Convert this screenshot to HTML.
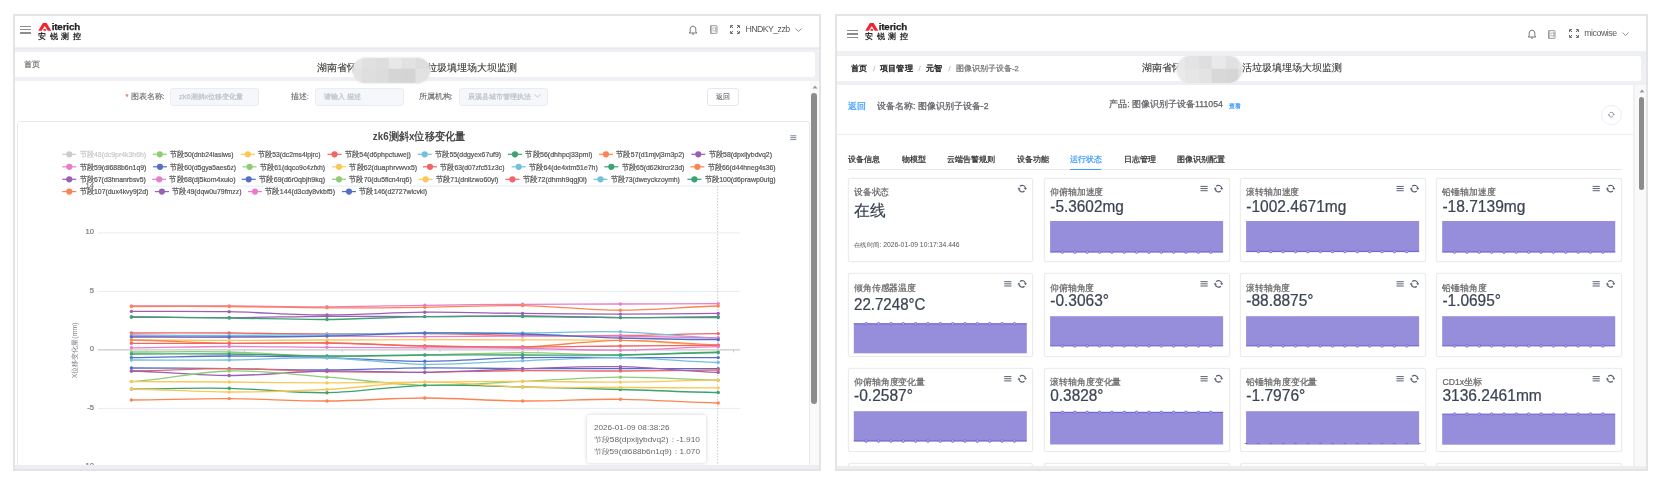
<!DOCTYPE html>
<html><head><meta charset="utf-8"><style>
*{margin:0;padding:0;box-sizing:border-box}
html,body{width:1662px;height:489px;overflow:hidden;background:#fff}
body{position:relative;font-family:"Liberation Sans",sans-serif;color:#333}
.t{position:absolute;white-space:nowrap;line-height:1}
div{-webkit-text-stroke:0.25px currentColor}
</style></head>
<body>
<div style="position:absolute;left:0;top:0;width:1662px;height:489px;will-change:transform">
<div style="position:absolute;left:15px;top:47.3px;width:804px;height:421px;background:#eef0f4"></div><div style="position:absolute;left:15px;top:48px;width:804px;height:1px;background:#e6e8ec"></div><div style="position:absolute;left:15px;top:16px;width:804px;height:31px;background:#fff"></div><div style="position:absolute;left:15px;top:52.4px;width:800px;height:24.6px;background:#fff;border-radius:0 3px 3px 0"></div><div style="position:absolute;left:15px;top:81px;width:804px;height:385px;background:#fff"></div><div style="position:absolute;left:837px;top:51px;width:809px;height:417px;background:#eef0f4"></div><div style="position:absolute;left:837px;top:16px;width:809px;height:35px;background:#fff"></div><div style="position:absolute;left:837px;top:56px;width:804px;height:25px;background:#fff;border-radius:0 3px 3px 0"></div><div style="position:absolute;left:837px;top:85px;width:797px;height:381px;background:#fff"></div><div style="position:absolute;left:20.2px;top:25.6px;width:11px;height:1.4px;background:#8d8d8d"></div><div style="position:absolute;left:20.2px;top:28.900000000000002px;width:11px;height:1.4px;background:#8d8d8d"></div><div style="position:absolute;left:20.2px;top:32.199999999999996px;width:11px;height:1.4px;background:#8d8d8d"></div><svg style="position:absolute;left:38.2px;top:23.0px;" width="14" height="9" viewBox="0 0 14 9"><path d="M0.2 7.8 L4.9 0.1 L8.6 0.1 L13.3 7.8 L9.8 7.8 L6.75 2.9 L3.7 7.8 Z" fill="#f5222d"/><rect x="5.4" y="6.0" width="2.7" height="1.8" rx="0.6" fill="#f5222d"/></svg><div style="position:absolute;left:51.7px;top:22.1px;white-space:nowrap;font-size:9.8px;font-weight:bold;color:#222;letter-spacing:-0.15px;line-height:1">iterich</div><div style="position:absolute;left:37.900000000000006px;top:32.3px;white-space:nowrap;font-size:8.4px;font-weight:bold;color:#2a2a2a;letter-spacing:3.75px;line-height:1;-webkit-text-stroke:0">安锐测控</div><svg style="position:absolute;left:687.5px;top:24.5px;" width="10" height="10" viewBox="0 0 10 10"><path d="M1.2 8 L8.8 8 L7.8 6.8 L7.8 4.2 C7.8 2.4 6.6 1.2 5 1.2 C3.4 1.2 2.2 2.4 2.2 4.2 L2.2 6.8 Z" fill="none" stroke="#666" stroke-width="0.9" stroke-linejoin="round"/><path d="M4 9 L6 9" stroke="#666" stroke-width="0.9"/></svg><svg style="position:absolute;left:709.5px;top:25px;" width="8" height="9" viewBox="0 0 8 9"><rect x="0.5" y="0.5" width="6.6" height="8" rx="0.5" fill="#ececec" stroke="#9a9a9a" stroke-width="0.8"/><path d="M1 0.6 L1 8.4" stroke="#888" stroke-width="0.9"/><circle cx="4.3" cy="4.3" r="1.5" fill="#fff" stroke="#aaa" stroke-width="0.6"/><path d="M6 2 L6 7" stroke="#999" stroke-width="0.7"/></svg><svg style="position:absolute;left:730px;top:24.8px;" width="10" height="9" viewBox="0 0 10 9"><path d="M0.6 3 L0.6 0.6 L3 0.6 M0.8 0.8 L3 3" fill="none" stroke="#666" stroke-width="1"/><path d="M9.4 3 L9.4 0.6 L7 0.6 M9.2 0.8 L7 3" fill="none" stroke="#666" stroke-width="1"/><path d="M0.6 6 L0.6 8.4 L3 8.4 M0.8 8.2 L3 6" fill="none" stroke="#666" stroke-width="1"/><path d="M9.4 6 L9.4 8.4 L7 8.4 M9.2 8.2 L7 6" fill="none" stroke="#666" stroke-width="1"/></svg><div style="position:absolute;left:745.5px;top:24.5px;white-space:nowrap;font-size:8.8px;color:#5a5a5a;letter-spacing:-0.6px;line-height:1;-webkit-text-stroke:0">HNDKY_zzb</div><svg style="position:absolute;left:795px;top:27.8px;" width="7" height="4.5" viewBox="0 0 7 4.5"><path d="M0.5 0.5 L3.5 3.5 L6.5 0.5" fill="none" stroke="#888" stroke-width="0.9"/></svg><div style="position:absolute;left:846.5px;top:29.900000000000002px;width:11px;height:1.4px;background:#8d8d8d"></div><div style="position:absolute;left:846.5px;top:33.199999999999996px;width:11px;height:1.4px;background:#8d8d8d"></div><div style="position:absolute;left:846.5px;top:36.5px;width:11px;height:1.4px;background:#8d8d8d"></div><svg style="position:absolute;left:865.2px;top:23.0px;" width="14" height="9" viewBox="0 0 14 9"><path d="M0.2 7.8 L4.9 0.1 L8.6 0.1 L13.3 7.8 L9.8 7.8 L6.75 2.9 L3.7 7.8 Z" fill="#f5222d"/><rect x="5.4" y="6.0" width="2.7" height="1.8" rx="0.6" fill="#f5222d"/></svg><div style="position:absolute;left:878.7px;top:22.1px;white-space:nowrap;font-size:9.8px;font-weight:bold;color:#222;letter-spacing:-0.15px;line-height:1">iterich</div><div style="position:absolute;left:864.9000000000001px;top:32.3px;white-space:nowrap;font-size:8.4px;font-weight:bold;color:#2a2a2a;letter-spacing:3.75px;line-height:1;-webkit-text-stroke:0">安锐测控</div><svg style="position:absolute;left:1526.5px;top:28.7px;" width="10" height="10" viewBox="0 0 10 10"><path d="M1.2 8 L8.8 8 L7.8 6.8 L7.8 4.2 C7.8 2.4 6.6 1.2 5 1.2 C3.4 1.2 2.2 2.4 2.2 4.2 L2.2 6.8 Z" fill="none" stroke="#666" stroke-width="0.9" stroke-linejoin="round"/><path d="M4 9 L6 9" stroke="#666" stroke-width="0.9"/></svg><svg style="position:absolute;left:1548.3px;top:29.5px;" width="8" height="9" viewBox="0 0 8 9"><rect x="0.5" y="0.5" width="6.6" height="8" rx="0.5" fill="#ececec" stroke="#9a9a9a" stroke-width="0.8"/><path d="M1 0.6 L1 8.4" stroke="#888" stroke-width="0.9"/><circle cx="4.3" cy="4.3" r="1.5" fill="#fff" stroke="#aaa" stroke-width="0.6"/><path d="M6 2 L6 7" stroke="#999" stroke-width="0.7"/></svg><svg style="position:absolute;left:1569px;top:29px;" width="10" height="9" viewBox="0 0 10 9"><path d="M0.6 3 L0.6 0.6 L3 0.6 M0.8 0.8 L3 3" fill="none" stroke="#666" stroke-width="1"/><path d="M9.4 3 L9.4 0.6 L7 0.6 M9.2 0.8 L7 3" fill="none" stroke="#666" stroke-width="1"/><path d="M0.6 6 L0.6 8.4 L3 8.4 M0.8 8.2 L3 6" fill="none" stroke="#666" stroke-width="1"/><path d="M9.4 6 L9.4 8.4 L7 8.4 M9.2 8.2 L7 6" fill="none" stroke="#666" stroke-width="1"/></svg><div style="position:absolute;left:1584.2px;top:28.6px;white-space:nowrap;font-size:8.8px;color:#5a5a5a;letter-spacing:-0.45px;line-height:1;-webkit-text-stroke:0">micowise</div><svg style="position:absolute;left:1622px;top:32px;" width="7" height="4.5" viewBox="0 0 7 4.5"><path d="M0.5 0.5 L3.5 3.5 L6.5 0.5" fill="none" stroke="#888" stroke-width="0.9"/></svg><div style="position:absolute;left:24.2px;top:61.4px;white-space:nowrap;font-size:7.7px;color:#777;line-height:1">首页</div><div style="position:absolute;left:316.8px;top:63.3px;white-space:nowrap;font-size:10.3px;color:#333;line-height:1;-webkit-text-stroke:0.1px #333">湖南省怀</div><div style="position:absolute;left:427.4px;top:63.3px;white-space:nowrap;font-size:10.3px;color:#333;line-height:1;-webkit-text-stroke:0.1px #333">垃圾填埋场大坝监测</div><div style="position:absolute;left:353.2px;top:58.4px;width:77.3px;height:24.6px;border-radius:12.3px;overflow:hidden;box-shadow:0 0 1.5px 1px rgba(235,235,235,0.8)"><svg width="77.3" height="24.6" style="display:block"><rect x="0.00" y="0.00" width="9.20" height="11.00" fill="#e6e6e6"/><rect x="8.90" y="0.00" width="13.50" height="11.00" fill="#e0e0e0"/><rect x="22.10" y="0.00" width="13.90" height="11.00" fill="#dddddd"/><rect x="35.70" y="0.00" width="13.60" height="11.00" fill="#e8e8e8"/><rect x="49.00" y="0.00" width="13.90" height="11.00" fill="#e2e2e2"/><rect x="62.60" y="0.00" width="15.00" height="11.00" fill="#dddddd"/><rect x="0.00" y="10.70" width="9.20" height="14.20" fill="#e3e3e3"/><rect x="8.90" y="10.70" width="13.50" height="14.20" fill="#dedede"/><rect x="22.10" y="10.70" width="13.90" height="14.20" fill="#dcdcdc"/><rect x="35.70" y="10.70" width="13.60" height="14.20" fill="#d5d5d5"/><rect x="49.00" y="10.70" width="13.90" height="14.20" fill="#d4d4d4"/><rect x="62.60" y="10.70" width="15.00" height="14.20" fill="#e2e2e2"/></svg></div><div style="position:absolute;left:850.6px;top:65.2px;white-space:nowrap;font-size:7.7px;color:#303133;line-height:1;-webkit-text-stroke:0.45px #303133">首页</div><div style="position:absolute;left:873.2px;top:65.2px;white-space:nowrap;font-size:7.3px;color:#c0c4cc;line-height:1">/</div><div style="position:absolute;left:880.1px;top:65.2px;white-space:nowrap;font-size:7.7px;color:#303133;line-height:1;-webkit-text-stroke:0.45px #303133;letter-spacing:0.2px">项目管理</div><div style="position:absolute;left:918.5px;top:65.2px;white-space:nowrap;font-size:7.3px;color:#c0c4cc;line-height:1">/</div><div style="position:absolute;left:925.8px;top:65.2px;white-space:nowrap;font-size:7.7px;color:#303133;line-height:1;-webkit-text-stroke:0.45px #303133;letter-spacing:0.2px">元智</div><div style="position:absolute;left:948.5px;top:65.2px;white-space:nowrap;font-size:7.3px;color:#c0c4cc;line-height:1">/</div><div style="position:absolute;left:955.9px;top:65.0px;white-space:nowrap;font-size:7.5px;color:#777;line-height:1">图像识别子设备-2</div><div style="position:absolute;left:1141.5px;top:63.3px;white-space:nowrap;font-size:10.3px;color:#333;line-height:1;-webkit-text-stroke:0.1px #333">湖南省怀</div><div style="position:absolute;left:1242.4px;top:63.3px;white-space:nowrap;font-size:10.3px;color:#333;line-height:1;-webkit-text-stroke:0.1px #333">活垃圾填埋场大坝监测</div><div style="position:absolute;left:1177.4px;top:55.9px;width:64.6px;height:26.8px;border-radius:13.4px;overflow:hidden;box-shadow:0 0 1.5px 1px rgba(235,235,235,0.8)"><svg width="64.6" height="26.8" style="display:block"><rect x="0.00" y="0.00" width="7.60" height="13.10" fill="#e8e8e8"/><rect x="7.30" y="0.00" width="14.60" height="13.10" fill="#e3e3e3"/><rect x="21.60" y="0.00" width="13.40" height="13.10" fill="#dedede"/><rect x="34.70" y="0.00" width="14.20" height="13.10" fill="#e9e9e9"/><rect x="48.60" y="0.00" width="13.00" height="13.10" fill="#e1e1e1"/><rect x="61.30" y="0.00" width="3.60" height="13.10" fill="#e6e6e6"/><rect x="0.00" y="12.80" width="7.60" height="14.30" fill="#e9e9e9"/><rect x="7.30" y="12.80" width="14.60" height="14.30" fill="#e6e6e6"/><rect x="21.60" y="12.80" width="13.40" height="14.30" fill="#e3e3e3"/><rect x="34.70" y="12.80" width="14.20" height="14.30" fill="#d8d8d8"/><rect x="48.60" y="12.80" width="13.00" height="14.30" fill="#d6d6d6"/><rect x="61.30" y="12.80" width="3.60" height="14.30" fill="#e0e0e0"/></svg></div><div style="position:absolute;left:125.5px;top:93.0px;white-space:nowrap;font-size:7.5px;color:#f56c6c;line-height:1">*</div><div style="position:absolute;left:130.5px;top:93.2px;white-space:nowrap;font-size:7.6px;color:#606266;line-height:1;-webkit-text-stroke:0.08px #606266">图表名称:</div><div style="position:absolute;left:170px;top:87.5px;width:89px;height:18px;background:#f5f7fa;border:1px solid #e9ecf2;border-radius:3px"></div><div style="position:absolute;left:179px;top:93.3px;white-space:nowrap;font-size:7.4px;color:#c0c4cc;line-height:1">zk6测斜x位移变化量</div><div style="position:absolute;left:290.7px;top:93.2px;white-space:nowrap;font-size:7.6px;color:#606266;line-height:1;-webkit-text-stroke:0.08px #606266">描述:</div><div style="position:absolute;left:314.5px;top:87.5px;width:89px;height:18px;background:#f5f7fa;border:1px solid #e9ecf2;border-radius:3px"></div><div style="position:absolute;left:323.5px;top:93.3px;white-space:nowrap;font-size:7.4px;color:#c0c4cc;line-height:1">请输入 描述</div><div style="position:absolute;left:418.6px;top:93.2px;white-space:nowrap;font-size:7.6px;color:#606266;line-height:1;-webkit-text-stroke:0.08px #606266">所属机构:</div><div style="position:absolute;left:459px;top:87.5px;width:88.5px;height:18px;background:#f5f7fa;border:1px solid #e9ecf2;border-radius:3px"></div><div style="position:absolute;left:467.6px;top:93.3px;white-space:nowrap;font-size:7.0px;color:#c0c4cc;line-height:1;width:63px;overflow:hidden">辰溪县城市管理执法</div><svg style="position:absolute;left:534px;top:94.3px;" width="7" height="4" viewBox="0 0 7 4"><path d="M0.5 0.5 L3.5 3 L6.5 0.5" fill="none" stroke="#c0c4cc" stroke-width="0.9"/></svg><div style="position:absolute;left:707px;top:88px;width:32px;height:17.5px;background:#fff;border:1px solid #e4e7ed;border-radius:3px"></div><div style="position:absolute;left:716px;top:93.3px;white-space:nowrap;font-size:7.4px;color:#606266;line-height:1;-webkit-text-stroke:0.08px #606266">返回</div><div style="position:absolute;left:848.2px;top:102.0px;white-space:nowrap;font-size:8.7px;color:#409eff;line-height:1">返回</div><div style="position:absolute;left:877px;top:102.0px;white-space:nowrap;font-size:8.7px;color:#606266;line-height:1">设备名称: 图像识别子设备-2</div><div style="position:absolute;left:1109.3px;top:100.0px;white-space:nowrap;font-size:8.7px;color:#606266;line-height:1">产品: 图像识别子设备111054</div><div style="position:absolute;left:1229px;top:102.6px;white-space:nowrap;font-size:6.1px;color:#409eff;line-height:1">查看</div><div style="position:absolute;left:1601px;top:104.5px;width:20.5px;height:20.5px;border:1px solid #ebeef5;border-radius:50%"></div><div style="position:absolute;left:837px;top:133.5px;width:797px;height:1px;background:#ebeef5"></div><div style="position:absolute;left:848.2px;top:155.7px;white-space:nowrap;font-size:7.7px;color:#303133;line-height:1">设备信息</div><div style="position:absolute;left:901.5px;top:155.7px;white-space:nowrap;font-size:7.7px;color:#303133;line-height:1">物模型</div><div style="position:absolute;left:947.3px;top:155.7px;white-space:nowrap;font-size:7.7px;color:#303133;line-height:1">云端告警规则</div><div style="position:absolute;left:1016.7px;top:155.7px;white-space:nowrap;font-size:7.7px;color:#303133;line-height:1">设备功能</div><div style="position:absolute;left:1070.2px;top:155.7px;white-space:nowrap;font-size:7.7px;color:#409eff;line-height:1">运行状态</div><div style="position:absolute;left:1124.1px;top:155.7px;white-space:nowrap;font-size:7.7px;color:#303133;line-height:1">日志管理</div><div style="position:absolute;left:1177.2px;top:155.7px;white-space:nowrap;font-size:7.7px;color:#303133;line-height:1">图像识别配置</div><div style="position:absolute;left:847.6px;top:168.8px;width:774px;height:1.2px;background:#e4e7ed"></div><div style="position:absolute;left:1070.2px;top:168.6px;width:31.2px;height:1.8px;background:#409eff"></div><div style="position:absolute;left:17px;top:121px;width:793px;height:350px;background:#fff;border:1px solid #e9e9e9;border-radius:3px"></div><div style="position:absolute;left:587.3px;top:415.2px;width:119px;height:47.6px;background:#fff;border-radius:3px;box-shadow:0 0 4px rgba(0,0,0,0.18)"></div><svg style="position:absolute;left:0;top:0" width="831" height="489" viewBox="0 0 831 489"><text x="372.80" y="140.30" font-size="10.6" fill="#464646" font-weight="bold" text-anchor="start" textLength="92.40" lengthAdjust="spacingAndGlyphs" >zk6测斜x位移变化量</text><rect x="790.3" y="135.20" width="6" height="1.1" fill="#8692a6"/><rect x="790.3" y="137.10" width="6" height="1.1" fill="#8692a6"/><rect x="790.3" y="139.00" width="6" height="1.1" fill="#8692a6"/><rect x="98" y="185.60" width="642" height="1" fill="#e6ebf3"/><text x="94.00" y="187.50" font-size="7.6" fill="#7a7d85" font-weight="normal" text-anchor="end" stroke="#7a7d85" stroke-width="0.22" >14</text><rect x="98" y="232.40" width="642" height="1" fill="#e6ebf3"/><text x="94.00" y="234.30" font-size="7.6" fill="#7a7d85" font-weight="normal" text-anchor="end" stroke="#7a7d85" stroke-width="0.22" >10</text><rect x="98" y="290.90" width="642" height="1" fill="#e6ebf3"/><text x="94.00" y="292.80" font-size="7.6" fill="#7a7d85" font-weight="normal" text-anchor="end" stroke="#7a7d85" stroke-width="0.22" >5</text><rect x="98" y="407.90" width="642" height="1" fill="#e6ebf3"/><text x="94.00" y="409.80" font-size="7.6" fill="#7a7d85" font-weight="normal" text-anchor="end" stroke="#7a7d85" stroke-width="0.22" >-5</text><rect x="98" y="466.40" width="642" height="1" fill="#e6ebf3"/><text x="94.00" y="468.30" font-size="7.6" fill="#7a7d85" font-weight="normal" text-anchor="end" stroke="#7a7d85" stroke-width="0.22" >-10</text><text x="94.00" y="351.30" font-size="7.6" fill="#7a7d85" font-weight="normal" text-anchor="end" stroke="#7a7d85" stroke-width="0.22" >0</text><rect x="98" y="349.30" width="642" height="1.2" fill="#c4c6cc"/><rect x="146.20" y="349.90" width="0.8" height="2.5" fill="#c4c6cc"/><rect x="244.00" y="349.90" width="0.8" height="2.5" fill="#c4c6cc"/><rect x="341.80" y="349.90" width="0.8" height="2.5" fill="#c4c6cc"/><rect x="439.60" y="349.90" width="0.8" height="2.5" fill="#c4c6cc"/><rect x="537.40" y="349.90" width="0.8" height="2.5" fill="#c4c6cc"/><rect x="635.20" y="349.90" width="0.8" height="2.5" fill="#c4c6cc"/><rect x="733.00" y="349.90" width="0.8" height="2.5" fill="#c4c6cc"/><text x="0" y="0" font-size="7" fill="#7a7d85" text-anchor="middle" transform="translate(77.2 350.3) rotate(-90)" textLength="56" lengthAdjust="spacingAndGlyphs">X位移变化量(mm)</text><line x1="717.6" y1="186" x2="717.6" y2="466" stroke="#b8bcc4" stroke-width="0.8" stroke-dasharray="1.5 1.5"/><path d="M131.40 306.00 C165.63 306.00 194.97 305.86 229.20 306.00 C263.43 306.14 292.77 306.92 327.00 306.80 C361.23 306.68 390.57 305.74 424.80 305.30 C459.03 304.86 488.37 304.53 522.60 304.30 C556.83 304.07 586.17 304.12 620.40 304.00 C654.63 303.88 683.97 303.67 718.20 303.60" fill="none" stroke="#ea7ccc" stroke-width="1.3"/><circle cx="131.4" cy="306" r="1.7" fill="#ea7ccc"/><circle cx="229.2" cy="306" r="1.7" fill="#ea7ccc"/><circle cx="327.0" cy="306.8" r="1.7" fill="#ea7ccc"/><circle cx="424.8" cy="305.3" r="1.7" fill="#ea7ccc"/><circle cx="522.6" cy="304.3" r="1.7" fill="#ea7ccc"/><circle cx="620.4" cy="304" r="1.7" fill="#ea7ccc"/><circle cx="718.2" cy="303.6" r="1.7" fill="#ea7ccc"/><path d="M131.40 306.50 C165.63 306.50 194.97 306.27 229.20 306.50 C263.43 306.73 292.77 307.66 327.00 307.80 C361.23 307.94 390.57 307.69 424.80 307.30 C459.03 306.92 488.37 305.09 522.60 305.60 C556.83 306.11 586.17 310.13 620.40 310.20 C654.63 310.27 683.97 306.74 718.20 306.00" fill="none" stroke="#fc8452" stroke-width="1.3"/><circle cx="131.4" cy="306.5" r="1.7" fill="#fc8452"/><circle cx="229.2" cy="306.5" r="1.7" fill="#fc8452"/><circle cx="327.0" cy="307.8" r="1.7" fill="#fc8452"/><circle cx="424.8" cy="307.3" r="1.7" fill="#fc8452"/><circle cx="522.6" cy="305.6" r="1.7" fill="#fc8452"/><circle cx="620.4" cy="310.2" r="1.7" fill="#fc8452"/><circle cx="718.2" cy="306" r="1.7" fill="#fc8452"/><path d="M131.40 311.40 C165.63 311.45 194.97 311.07 229.20 311.70 C263.43 312.33 292.77 314.91 327.00 315.00 C361.23 315.09 390.57 312.48 424.80 312.20 C459.03 311.92 488.37 313.07 522.60 313.40 C556.83 313.73 586.17 314.10 620.40 314.10 C654.63 314.10 683.97 313.52 718.20 313.40" fill="none" stroke="#9a60b4" stroke-width="1.3"/><circle cx="131.4" cy="311.4" r="1.7" fill="#9a60b4"/><circle cx="229.2" cy="311.7" r="1.7" fill="#9a60b4"/><circle cx="327.0" cy="315" r="1.7" fill="#9a60b4"/><circle cx="424.8" cy="312.2" r="1.7" fill="#9a60b4"/><circle cx="522.6" cy="313.4" r="1.7" fill="#9a60b4"/><circle cx="620.4" cy="314.1" r="1.7" fill="#9a60b4"/><circle cx="718.2" cy="313.4" r="1.7" fill="#9a60b4"/><path d="M131.40 317.00 C165.63 317.11 194.97 317.72 229.20 317.60 C263.43 317.48 292.77 316.48 327.00 316.30 C361.23 316.12 390.57 316.67 424.80 316.60 C459.03 316.53 488.37 315.72 522.60 315.90 C556.83 316.07 586.17 317.48 620.40 317.60 C654.63 317.72 683.97 316.78 718.20 316.60" fill="none" stroke="#9a60b4" stroke-width="1.3"/><circle cx="131.4" cy="317" r="1.7" fill="#9a60b4"/><circle cx="229.2" cy="317.6" r="1.7" fill="#9a60b4"/><circle cx="327.0" cy="316.3" r="1.7" fill="#9a60b4"/><circle cx="424.8" cy="316.6" r="1.7" fill="#9a60b4"/><circle cx="522.6" cy="315.9" r="1.7" fill="#9a60b4"/><circle cx="620.4" cy="317.6" r="1.7" fill="#9a60b4"/><circle cx="718.2" cy="316.6" r="1.7" fill="#9a60b4"/><path d="M131.40 317.00 C165.63 317.18 194.97 317.56 229.20 318.00 C263.43 318.44 292.77 319.75 327.00 319.50 C361.23 319.25 390.57 317.12 424.80 316.60 C459.03 316.08 488.37 316.32 522.60 316.50 C556.83 316.68 586.17 317.43 620.40 317.60 C654.63 317.78 683.97 317.52 718.20 317.50" fill="none" stroke="#3ba272" stroke-width="1.3"/><circle cx="131.4" cy="317" r="1.7" fill="#3ba272"/><circle cx="229.2" cy="318" r="1.7" fill="#3ba272"/><circle cx="327.0" cy="319.5" r="1.7" fill="#3ba272"/><circle cx="424.8" cy="316.6" r="1.7" fill="#3ba272"/><circle cx="522.6" cy="316.5" r="1.7" fill="#3ba272"/><circle cx="620.4" cy="317.6" r="1.7" fill="#3ba272"/><circle cx="718.2" cy="317.5" r="1.7" fill="#3ba272"/><path d="M131.40 333.00 C165.63 333.00 194.97 332.82 229.20 333.00 C263.43 333.18 292.77 333.91 327.00 334.00 C361.23 334.09 390.57 333.24 424.80 333.50 C459.03 333.76 488.37 335.15 522.60 335.50 C556.83 335.85 586.17 335.83 620.40 335.50 C654.63 335.17 683.97 333.93 718.20 333.60" fill="none" stroke="#ee6666" stroke-width="1.3"/><circle cx="131.4" cy="333" r="1.7" fill="#ee6666"/><circle cx="229.2" cy="333" r="1.7" fill="#ee6666"/><circle cx="327.0" cy="334" r="1.7" fill="#ee6666"/><circle cx="424.8" cy="333.5" r="1.7" fill="#ee6666"/><circle cx="522.6" cy="335.5" r="1.7" fill="#ee6666"/><circle cx="620.4" cy="335.5" r="1.7" fill="#ee6666"/><circle cx="718.2" cy="333.6" r="1.7" fill="#ee6666"/><path d="M131.40 335.00 C165.63 335.09 194.97 335.62 229.20 335.50 C263.43 335.38 292.77 334.74 327.00 334.30 C361.23 333.86 390.57 333.23 424.80 333.00 C459.03 332.77 488.37 333.21 522.60 333.00 C556.83 332.79 586.17 330.93 620.40 331.80 C654.63 332.68 683.97 336.92 718.20 338.00" fill="none" stroke="#73c0de" stroke-width="1.3"/><circle cx="131.4" cy="335" r="1.7" fill="#73c0de"/><circle cx="229.2" cy="335.5" r="1.7" fill="#73c0de"/><circle cx="327.0" cy="334.3" r="1.7" fill="#73c0de"/><circle cx="424.8" cy="333" r="1.7" fill="#73c0de"/><circle cx="522.6" cy="333" r="1.7" fill="#73c0de"/><circle cx="620.4" cy="331.8" r="1.7" fill="#73c0de"/><circle cx="718.2" cy="338" r="1.7" fill="#73c0de"/><path d="M131.40 336.00 C165.63 336.21 194.97 337.20 229.20 337.20 C263.43 337.20 292.77 336.09 327.00 336.00 C361.23 335.91 390.57 336.70 424.80 336.70 C459.03 336.70 488.37 336.12 522.60 336.00 C556.83 335.88 586.17 335.65 620.40 336.00 C654.63 336.35 683.97 337.65 718.20 338.00" fill="none" stroke="#ea7ccc" stroke-width="1.3"/><circle cx="131.4" cy="336" r="1.7" fill="#ea7ccc"/><circle cx="229.2" cy="337.2" r="1.7" fill="#ea7ccc"/><circle cx="327.0" cy="336" r="1.7" fill="#ea7ccc"/><circle cx="424.8" cy="336.7" r="1.7" fill="#ea7ccc"/><circle cx="522.6" cy="336" r="1.7" fill="#ea7ccc"/><circle cx="620.4" cy="336" r="1.7" fill="#ea7ccc"/><circle cx="718.2" cy="338" r="1.7" fill="#ea7ccc"/><path d="M131.40 337.00 C165.63 337.00 194.97 337.18 229.20 337.00 C263.43 336.82 292.77 336.70 327.00 336.00 C361.23 335.30 390.57 333.35 424.80 333.00 C459.03 332.65 488.37 333.12 522.60 334.00 C556.83 334.88 586.17 337.00 620.40 338.00 C654.63 339.00 683.97 339.40 718.20 339.70" fill="none" stroke="#5470c6" stroke-width="1.3"/><circle cx="131.4" cy="337" r="1.7" fill="#5470c6"/><circle cx="229.2" cy="337" r="1.7" fill="#5470c6"/><circle cx="327.0" cy="336" r="1.7" fill="#5470c6"/><circle cx="424.8" cy="333" r="1.7" fill="#5470c6"/><circle cx="522.6" cy="334" r="1.7" fill="#5470c6"/><circle cx="620.4" cy="338" r="1.7" fill="#5470c6"/><circle cx="718.2" cy="339.7" r="1.7" fill="#5470c6"/><path d="M131.40 340.00 C165.63 340.07 194.97 340.40 229.20 340.40 C263.43 340.40 292.77 340.12 327.00 340.00 C361.23 339.88 390.57 339.72 424.80 339.70 C459.03 339.68 488.37 339.78 522.60 339.90 C556.83 340.02 586.17 339.44 620.40 340.40 C654.63 341.36 683.97 344.52 718.20 345.40" fill="none" stroke="#fac858" stroke-width="1.3"/><circle cx="131.4" cy="340" r="1.7" fill="#fac858"/><circle cx="229.2" cy="340.4" r="1.7" fill="#fac858"/><circle cx="327.0" cy="340" r="1.7" fill="#fac858"/><circle cx="424.8" cy="339.7" r="1.7" fill="#fac858"/><circle cx="522.6" cy="339.9" r="1.7" fill="#fac858"/><circle cx="620.4" cy="340.4" r="1.7" fill="#fac858"/><circle cx="718.2" cy="345.4" r="1.7" fill="#fac858"/><path d="M131.40 340.00 C165.63 340.58 194.97 342.79 229.20 343.30 C263.43 343.81 292.77 342.43 327.00 342.90 C361.23 343.37 390.57 345.28 424.80 346.00 C459.03 346.72 488.37 347.98 522.60 347.00 C556.83 346.02 586.17 340.75 620.40 340.40 C654.63 340.05 683.97 344.19 718.20 345.00" fill="none" stroke="#fc8452" stroke-width="1.3"/><circle cx="131.4" cy="340" r="1.7" fill="#fc8452"/><circle cx="229.2" cy="343.3" r="1.7" fill="#fc8452"/><circle cx="327.0" cy="342.9" r="1.7" fill="#fc8452"/><circle cx="424.8" cy="346" r="1.7" fill="#fc8452"/><circle cx="522.6" cy="347" r="1.7" fill="#fc8452"/><circle cx="620.4" cy="340.4" r="1.7" fill="#fc8452"/><circle cx="718.2" cy="345" r="1.7" fill="#fc8452"/><path d="M131.40 343.30 C165.63 343.30 194.97 343.35 229.20 343.30 C263.43 343.25 292.77 342.53 327.00 343.00 C361.23 343.47 390.57 345.30 424.80 346.00 C459.03 346.70 488.37 347.00 522.60 347.00 C556.83 347.00 586.17 346.28 620.40 346.00 C654.63 345.72 683.97 345.50 718.20 345.40" fill="none" stroke="#ee6666" stroke-width="1.3"/><circle cx="131.4" cy="343.3" r="1.7" fill="#ee6666"/><circle cx="229.2" cy="343.3" r="1.7" fill="#ee6666"/><circle cx="327.0" cy="343" r="1.7" fill="#ee6666"/><circle cx="424.8" cy="346" r="1.7" fill="#ee6666"/><circle cx="522.6" cy="347" r="1.7" fill="#ee6666"/><circle cx="620.4" cy="346" r="1.7" fill="#ee6666"/><circle cx="718.2" cy="345.4" r="1.7" fill="#ee6666"/><path d="M131.40 347.80 C165.63 347.57 194.97 346.59 229.20 346.50 C263.43 346.41 292.77 347.07 327.00 347.30 C361.23 347.53 390.57 347.62 424.80 347.80 C459.03 347.98 488.37 347.88 522.60 348.30 C556.83 348.72 586.17 350.50 620.40 350.20 C654.63 349.90 683.97 347.23 718.20 346.60" fill="none" stroke="#ea7ccc" stroke-width="1.3"/><circle cx="131.4" cy="347.8" r="1.7" fill="#ea7ccc"/><circle cx="229.2" cy="346.5" r="1.7" fill="#ea7ccc"/><circle cx="327.0" cy="347.3" r="1.7" fill="#ea7ccc"/><circle cx="424.8" cy="347.8" r="1.7" fill="#ea7ccc"/><circle cx="522.6" cy="348.3" r="1.7" fill="#ea7ccc"/><circle cx="620.4" cy="350.2" r="1.7" fill="#ea7ccc"/><circle cx="718.2" cy="346.6" r="1.7" fill="#ea7ccc"/><path d="M131.40 352.00 C165.63 352.00 194.97 351.25 229.20 352.00 C263.43 352.75 292.77 355.78 327.00 356.30 C361.23 356.82 390.57 355.63 424.80 355.00 C459.03 354.37 488.37 352.70 522.60 352.70 C556.83 352.70 586.17 355.12 620.40 355.00 C654.63 354.88 683.97 352.52 718.20 352.00" fill="none" stroke="#91cc75" stroke-width="1.3"/><circle cx="131.4" cy="352" r="1.7" fill="#91cc75"/><circle cx="229.2" cy="352" r="1.7" fill="#91cc75"/><circle cx="327.0" cy="356.3" r="1.7" fill="#91cc75"/><circle cx="424.8" cy="355" r="1.7" fill="#91cc75"/><circle cx="522.6" cy="352.7" r="1.7" fill="#91cc75"/><circle cx="620.4" cy="355" r="1.7" fill="#91cc75"/><circle cx="718.2" cy="352" r="1.7" fill="#91cc75"/><path d="M131.40 354.00 C165.63 354.00 194.97 353.65 229.20 354.00 C263.43 354.35 292.77 355.82 327.00 356.00 C361.23 356.18 390.57 355.18 424.80 355.00 C459.03 354.82 488.37 355.00 522.60 355.00 C556.83 355.00 586.17 355.44 620.40 355.00 C654.63 354.56 683.97 352.94 718.20 352.50" fill="none" stroke="#3ba272" stroke-width="1.3"/><circle cx="131.4" cy="354" r="1.7" fill="#3ba272"/><circle cx="229.2" cy="354" r="1.7" fill="#3ba272"/><circle cx="327.0" cy="356" r="1.7" fill="#3ba272"/><circle cx="424.8" cy="355" r="1.7" fill="#3ba272"/><circle cx="522.6" cy="355" r="1.7" fill="#3ba272"/><circle cx="620.4" cy="355" r="1.7" fill="#3ba272"/><circle cx="718.2" cy="352.5" r="1.7" fill="#3ba272"/><path d="M131.40 357.60 C165.63 357.32 194.97 356.00 229.20 356.00 C263.43 356.00 292.77 356.67 327.00 357.60 C361.23 358.53 390.57 361.30 424.80 361.30 C459.03 361.30 488.37 358.25 522.60 357.60 C556.83 356.95 586.17 357.60 620.40 357.60 C654.63 357.60 683.97 357.60 718.20 357.60" fill="none" stroke="#5470c6" stroke-width="1.3"/><circle cx="131.4" cy="357.6" r="1.7" fill="#5470c6"/><circle cx="229.2" cy="356" r="1.7" fill="#5470c6"/><circle cx="327.0" cy="357.6" r="1.7" fill="#5470c6"/><circle cx="424.8" cy="361.3" r="1.7" fill="#5470c6"/><circle cx="522.6" cy="357.6" r="1.7" fill="#5470c6"/><circle cx="620.4" cy="357.6" r="1.7" fill="#5470c6"/><circle cx="718.2" cy="357.6" r="1.7" fill="#5470c6"/><path d="M131.40 360.00 C165.63 360.00 194.97 360.35 229.20 360.00 C263.43 359.65 292.77 357.23 327.00 358.00 C361.23 358.77 390.57 363.91 424.80 364.40 C459.03 364.89 488.37 361.99 522.60 360.80 C556.83 359.61 586.17 357.30 620.40 357.60 C654.63 357.90 683.97 361.64 718.20 362.50" fill="none" stroke="#73c0de" stroke-width="1.3"/><circle cx="131.4" cy="360" r="1.7" fill="#73c0de"/><circle cx="229.2" cy="360" r="1.7" fill="#73c0de"/><circle cx="327.0" cy="358" r="1.7" fill="#73c0de"/><circle cx="424.8" cy="364.4" r="1.7" fill="#73c0de"/><circle cx="522.6" cy="360.8" r="1.7" fill="#73c0de"/><circle cx="620.4" cy="357.6" r="1.7" fill="#73c0de"/><circle cx="718.2" cy="362.5" r="1.7" fill="#73c0de"/><path d="M131.40 368.00 C165.63 368.11 194.97 368.25 229.20 368.60 C263.43 368.95 292.77 370.12 327.00 370.00 C361.23 369.88 390.57 368.14 424.80 367.90 C459.03 367.65 488.37 368.48 522.60 368.60 C556.83 368.72 586.17 368.58 620.40 368.60 C654.63 368.62 683.97 368.68 718.20 368.70" fill="none" stroke="#5470c6" stroke-width="1.3"/><circle cx="131.4" cy="368" r="1.7" fill="#5470c6"/><circle cx="229.2" cy="368.6" r="1.7" fill="#5470c6"/><circle cx="327.0" cy="370" r="1.7" fill="#5470c6"/><circle cx="424.8" cy="367.9" r="1.7" fill="#5470c6"/><circle cx="522.6" cy="368.6" r="1.7" fill="#5470c6"/><circle cx="620.4" cy="368.6" r="1.7" fill="#5470c6"/><circle cx="718.2" cy="368.7" r="1.7" fill="#5470c6"/><path d="M131.40 371.00 C165.63 370.58 194.97 368.50 229.20 368.60 C263.43 368.71 292.77 370.95 327.00 371.60 C361.23 372.25 390.57 372.48 424.80 372.30 C459.03 372.12 488.37 370.83 522.60 370.60 C556.83 370.37 586.17 371.11 620.40 371.00 C654.63 370.89 683.97 370.18 718.20 370.00" fill="none" stroke="#ee6666" stroke-width="1.3"/><circle cx="131.4" cy="371" r="1.7" fill="#ee6666"/><circle cx="229.2" cy="368.6" r="1.7" fill="#ee6666"/><circle cx="327.0" cy="371.6" r="1.7" fill="#ee6666"/><circle cx="424.8" cy="372.3" r="1.7" fill="#ee6666"/><circle cx="522.6" cy="370.6" r="1.7" fill="#ee6666"/><circle cx="620.4" cy="371" r="1.7" fill="#ee6666"/><circle cx="718.2" cy="370" r="1.7" fill="#ee6666"/><path d="M131.40 371.00 C165.63 371.79 194.97 375.50 229.20 375.50 C263.43 375.50 292.77 371.56 327.00 371.00 C361.23 370.44 390.57 372.72 424.80 372.30 C459.03 371.88 488.37 369.58 522.60 368.60 C556.83 367.62 586.17 366.03 620.40 366.70 C654.63 367.37 683.97 371.40 718.20 372.40" fill="none" stroke="#9a60b4" stroke-width="1.3"/><circle cx="131.4" cy="371" r="1.7" fill="#9a60b4"/><circle cx="229.2" cy="375.5" r="1.7" fill="#9a60b4"/><circle cx="327.0" cy="371" r="1.7" fill="#9a60b4"/><circle cx="424.8" cy="372.3" r="1.7" fill="#9a60b4"/><circle cx="522.6" cy="368.6" r="1.7" fill="#9a60b4"/><circle cx="620.4" cy="366.7" r="1.7" fill="#9a60b4"/><circle cx="718.2" cy="372.4" r="1.7" fill="#9a60b4"/><path d="M131.40 381.60 C165.63 379.75 194.97 371.77 229.20 371.00 C263.43 370.23 292.77 374.70 327.00 377.20 C361.23 379.70 390.57 384.56 424.80 385.30 C459.03 386.04 488.37 382.82 522.60 381.40 C556.83 379.98 586.17 377.41 620.40 377.20 C654.63 376.99 683.97 379.68 718.20 380.20" fill="none" stroke="#91cc75" stroke-width="1.3"/><circle cx="131.4" cy="381.6" r="1.7" fill="#91cc75"/><circle cx="229.2" cy="371" r="1.7" fill="#91cc75"/><circle cx="327.0" cy="377.2" r="1.7" fill="#91cc75"/><circle cx="424.8" cy="385.3" r="1.7" fill="#91cc75"/><circle cx="522.6" cy="381.4" r="1.7" fill="#91cc75"/><circle cx="620.4" cy="377.2" r="1.7" fill="#91cc75"/><circle cx="718.2" cy="380.2" r="1.7" fill="#91cc75"/><path d="M131.40 381.60 C165.63 381.67 194.97 381.77 229.20 382.00 C263.43 382.23 292.77 382.88 327.00 382.90 C361.23 382.92 390.57 382.36 424.80 382.10 C459.03 381.84 488.37 381.40 522.60 381.40 C556.83 381.40 586.17 382.31 620.40 382.10 C654.63 381.89 683.97 380.53 718.20 380.20" fill="none" stroke="#fac858" stroke-width="1.3"/><circle cx="131.4" cy="381.6" r="1.7" fill="#fac858"/><circle cx="229.2" cy="382" r="1.7" fill="#fac858"/><circle cx="327.0" cy="382.9" r="1.7" fill="#fac858"/><circle cx="424.8" cy="382.1" r="1.7" fill="#fac858"/><circle cx="522.6" cy="381.4" r="1.7" fill="#fac858"/><circle cx="620.4" cy="382.1" r="1.7" fill="#fac858"/><circle cx="718.2" cy="380.2" r="1.7" fill="#fac858"/><path d="M131.40 389.00 C165.63 388.88 194.97 387.65 229.20 388.30 C263.43 388.95 292.77 393.22 327.00 392.70 C361.23 392.18 390.57 386.30 424.80 385.30 C459.03 384.30 488.37 386.26 522.60 387.00 C556.83 387.74 586.17 388.54 620.40 389.50 C654.63 390.46 683.97 391.98 718.20 392.50" fill="none" stroke="#3ba272" stroke-width="1.3"/><circle cx="131.4" cy="389" r="1.7" fill="#3ba272"/><circle cx="229.2" cy="388.3" r="1.7" fill="#3ba272"/><circle cx="327.0" cy="392.7" r="1.7" fill="#3ba272"/><circle cx="424.8" cy="385.3" r="1.7" fill="#3ba272"/><circle cx="522.6" cy="387" r="1.7" fill="#3ba272"/><circle cx="620.4" cy="389.5" r="1.7" fill="#3ba272"/><circle cx="718.2" cy="392.5" r="1.7" fill="#3ba272"/><path d="M131.40 389.00 C165.63 389.52 194.97 391.91 229.20 392.00 C263.43 392.09 292.77 391.23 327.00 389.50 C361.23 387.77 390.57 382.54 424.80 382.10 C459.03 381.66 488.37 386.06 522.60 387.00 C556.83 387.94 586.17 387.34 620.40 387.50 C654.63 387.66 683.97 387.83 718.20 387.90" fill="none" stroke="#fac858" stroke-width="1.3"/><circle cx="131.4" cy="389" r="1.7" fill="#fac858"/><circle cx="229.2" cy="392" r="1.7" fill="#fac858"/><circle cx="327.0" cy="389.5" r="1.7" fill="#fac858"/><circle cx="424.8" cy="382.1" r="1.7" fill="#fac858"/><circle cx="522.6" cy="387" r="1.7" fill="#fac858"/><circle cx="620.4" cy="387.5" r="1.7" fill="#fac858"/><circle cx="718.2" cy="387.9" r="1.7" fill="#fac858"/><path d="M131.40 400.00 C165.63 399.75 194.97 398.43 229.20 398.60 C263.43 398.78 292.77 401.11 327.00 401.00 C361.23 400.89 390.57 398.00 424.80 398.00 C459.03 398.00 488.37 400.77 522.60 401.00 C556.83 401.23 586.17 398.95 620.40 399.30 C654.63 399.65 683.97 402.35 718.20 403.00" fill="none" stroke="#fc8452" stroke-width="1.3"/><circle cx="131.4" cy="400" r="1.7" fill="#fc8452"/><circle cx="229.2" cy="398.6" r="1.7" fill="#fc8452"/><circle cx="327.0" cy="401" r="1.7" fill="#fc8452"/><circle cx="424.8" cy="398" r="1.7" fill="#fc8452"/><circle cx="522.6" cy="401" r="1.7" fill="#fc8452"/><circle cx="620.4" cy="399.3" r="1.7" fill="#fc8452"/><circle cx="718.2" cy="403" r="1.7" fill="#fc8452"/><rect x="62.30" y="153.70" width="14" height="1.2" fill="#cccccc"/><circle cx="69.30" cy="154.30" r="3.1" fill="#cccccc"/><text x="79.50" y="157.00" font-size="7.6" fill="#c8c8c8" font-weight="normal" text-anchor="start" textLength="66.60" lengthAdjust="spacingAndGlyphs" stroke="#c8c8c8" stroke-width="0.22" >节段48(dc9pr4k3h6h)</text><rect x="152.80" y="153.70" width="14" height="1.2" fill="#91cc75"/><circle cx="159.80" cy="154.30" r="3.1" fill="#91cc75"/><text x="170.00" y="157.00" font-size="7.6" fill="#555" font-weight="normal" text-anchor="start" textLength="63.40" lengthAdjust="spacingAndGlyphs" stroke="#555" stroke-width="0.22" >节段50(dnb24lasiws)</text><rect x="240.80" y="153.70" width="14" height="1.2" fill="#fac858"/><circle cx="247.80" cy="154.30" r="3.1" fill="#fac858"/><text x="258.00" y="157.00" font-size="7.6" fill="#555" font-weight="normal" text-anchor="start" textLength="62.40" lengthAdjust="spacingAndGlyphs" stroke="#555" stroke-width="0.22" >节段53(dc2ms4lpjrc)</text><rect x="327.50" y="153.70" width="14" height="1.2" fill="#ee6666"/><circle cx="334.50" cy="154.30" r="3.1" fill="#ee6666"/><text x="344.70" y="157.00" font-size="7.6" fill="#555" font-weight="normal" text-anchor="start" textLength="66.10" lengthAdjust="spacingAndGlyphs" stroke="#555" stroke-width="0.22" >节段54(d6phpctuwej)</text><rect x="417.70" y="153.70" width="14" height="1.2" fill="#73c0de"/><circle cx="424.70" cy="154.30" r="3.1" fill="#73c0de"/><text x="434.90" y="157.00" font-size="7.6" fill="#555" font-weight="normal" text-anchor="start" textLength="66.20" lengthAdjust="spacingAndGlyphs" stroke="#555" stroke-width="0.22" >节段55(ddgyex67uf9)</text><rect x="508.00" y="153.70" width="14" height="1.2" fill="#3ba272"/><circle cx="515.00" cy="154.30" r="3.1" fill="#3ba272"/><text x="525.20" y="157.00" font-size="7.6" fill="#555" font-weight="normal" text-anchor="start" textLength="67.20" lengthAdjust="spacingAndGlyphs" stroke="#555" stroke-width="0.22" >节段56(dhhpcj33pml)</text><rect x="599.00" y="153.70" width="14" height="1.2" fill="#fc8452"/><circle cx="606.00" cy="154.30" r="3.1" fill="#fc8452"/><text x="616.20" y="157.00" font-size="7.6" fill="#555" font-weight="normal" text-anchor="start" textLength="68.20" lengthAdjust="spacingAndGlyphs" stroke="#555" stroke-width="0.22" >节段57(d1mjvj3m3p2)</text><rect x="691.30" y="153.70" width="14" height="1.2" fill="#9a60b4"/><circle cx="698.30" cy="154.30" r="3.1" fill="#9a60b4"/><text x="708.50" y="157.00" font-size="7.6" fill="#555" font-weight="normal" text-anchor="start" textLength="63.50" lengthAdjust="spacingAndGlyphs" stroke="#555" stroke-width="0.22" >节段58(dpxijybdvq2)</text><rect x="62.30" y="166.20" width="14" height="1.2" fill="#ea7ccc"/><circle cx="69.30" cy="166.80" r="3.1" fill="#ea7ccc"/><text x="79.50" y="169.50" font-size="7.6" fill="#555" font-weight="normal" text-anchor="start" textLength="66.90" lengthAdjust="spacingAndGlyphs" stroke="#555" stroke-width="0.22" >节段59(di688b6n1q9)</text><rect x="153.00" y="166.20" width="14" height="1.2" fill="#5470c6"/><circle cx="160.00" cy="166.80" r="3.1" fill="#5470c6"/><text x="170.20" y="169.50" font-size="7.6" fill="#555" font-weight="normal" text-anchor="start" textLength="65.90" lengthAdjust="spacingAndGlyphs" stroke="#555" stroke-width="0.22" >节段60(d5gya5aes6z)</text><rect x="242.60" y="166.20" width="14" height="1.2" fill="#91cc75"/><circle cx="249.60" cy="166.80" r="3.1" fill="#91cc75"/><text x="259.80" y="169.50" font-size="7.6" fill="#555" font-weight="normal" text-anchor="start" textLength="65.30" lengthAdjust="spacingAndGlyphs" stroke="#555" stroke-width="0.22" >节段61(dqco9c4zfxh)</text><rect x="332.00" y="166.20" width="14" height="1.2" fill="#fac858"/><circle cx="339.00" cy="166.80" r="3.1" fill="#fac858"/><text x="349.20" y="169.50" font-size="7.6" fill="#555" font-weight="normal" text-anchor="start" textLength="67.90" lengthAdjust="spacingAndGlyphs" stroke="#555" stroke-width="0.22" >节段62(duaphrvwvx5)</text><rect x="423.00" y="166.20" width="14" height="1.2" fill="#ee6666"/><circle cx="430.00" cy="166.80" r="3.1" fill="#ee6666"/><text x="440.20" y="169.50" font-size="7.6" fill="#555" font-weight="normal" text-anchor="start" textLength="64.20" lengthAdjust="spacingAndGlyphs" stroke="#555" stroke-width="0.22" >节段63(d07zfc51z3c)</text><rect x="511.70" y="166.20" width="14" height="1.2" fill="#73c0de"/><circle cx="518.70" cy="166.80" r="3.1" fill="#73c0de"/><text x="528.90" y="169.50" font-size="7.6" fill="#555" font-weight="normal" text-anchor="start" textLength="68.90" lengthAdjust="spacingAndGlyphs" stroke="#555" stroke-width="0.22" >节段64(de4xtm51e7h)</text><rect x="604.30" y="166.20" width="14" height="1.2" fill="#3ba272"/><circle cx="611.30" cy="166.80" r="3.1" fill="#3ba272"/><text x="621.50" y="169.50" font-size="7.6" fill="#555" font-weight="normal" text-anchor="start" textLength="62.90" lengthAdjust="spacingAndGlyphs" stroke="#555" stroke-width="0.22" >节段65(d62klrcr23d)</text><rect x="690.40" y="166.20" width="14" height="1.2" fill="#fc8452"/><circle cx="697.40" cy="166.80" r="3.1" fill="#fc8452"/><text x="707.60" y="169.50" font-size="7.6" fill="#555" font-weight="normal" text-anchor="start" textLength="68.00" lengthAdjust="spacingAndGlyphs" stroke="#555" stroke-width="0.22" >节段66(d44hneg4s36)</text><rect x="62.30" y="178.70" width="14" height="1.2" fill="#9a60b4"/><circle cx="69.30" cy="179.30" r="3.1" fill="#9a60b4"/><text x="79.50" y="182.00" font-size="7.6" fill="#555" font-weight="normal" text-anchor="start" textLength="66.40" lengthAdjust="spacingAndGlyphs" stroke="#555" stroke-width="0.22" >节段67(d3hnanrbsv5)</text><rect x="152.20" y="178.70" width="14" height="1.2" fill="#ea7ccc"/><circle cx="159.20" cy="179.30" r="3.1" fill="#ea7ccc"/><text x="169.40" y="182.00" font-size="7.6" fill="#555" font-weight="normal" text-anchor="start" textLength="66.10" lengthAdjust="spacingAndGlyphs" stroke="#555" stroke-width="0.22" >节段68(dj5kom4xuio)</text><rect x="241.70" y="178.70" width="14" height="1.2" fill="#5470c6"/><circle cx="248.70" cy="179.30" r="3.1" fill="#5470c6"/><text x="258.90" y="182.00" font-size="7.6" fill="#555" font-weight="normal" text-anchor="start" textLength="66.20" lengthAdjust="spacingAndGlyphs" stroke="#555" stroke-width="0.22" >节段69(d6r0qbjh9kq)</text><rect x="332.00" y="178.70" width="14" height="1.2" fill="#91cc75"/><circle cx="339.00" cy="179.30" r="3.1" fill="#91cc75"/><text x="349.20" y="182.00" font-size="7.6" fill="#555" font-weight="normal" text-anchor="start" textLength="62.50" lengthAdjust="spacingAndGlyphs" stroke="#555" stroke-width="0.22" >节段70(du5flcn4rq6)</text><rect x="418.60" y="178.70" width="14" height="1.2" fill="#fac858"/><circle cx="425.60" cy="179.30" r="3.1" fill="#fac858"/><text x="435.80" y="182.00" font-size="7.6" fill="#555" font-weight="normal" text-anchor="start" textLength="62.60" lengthAdjust="spacingAndGlyphs" stroke="#555" stroke-width="0.22" >节段71(dnilzwo60yl)</text><rect x="505.40" y="178.70" width="14" height="1.2" fill="#ee6666"/><circle cx="512.40" cy="179.30" r="3.1" fill="#ee6666"/><text x="522.60" y="182.00" font-size="7.6" fill="#555" font-weight="normal" text-anchor="start" textLength="64.30" lengthAdjust="spacingAndGlyphs" stroke="#555" stroke-width="0.22" >节段72(dhmh9qgj0i)</text><rect x="593.50" y="178.70" width="14" height="1.2" fill="#73c0de"/><circle cx="600.50" cy="179.30" r="3.1" fill="#73c0de"/><text x="610.70" y="182.00" font-size="7.6" fill="#555" font-weight="normal" text-anchor="start" textLength="69.20" lengthAdjust="spacingAndGlyphs" stroke="#555" stroke-width="0.22" >节段73(dweyckzoymh)</text><rect x="687.40" y="178.70" width="14" height="1.2" fill="#3ba272"/><circle cx="694.40" cy="179.30" r="3.1" fill="#3ba272"/><text x="704.60" y="182.00" font-size="7.6" fill="#555" font-weight="normal" text-anchor="start" textLength="71.00" lengthAdjust="spacingAndGlyphs" stroke="#555" stroke-width="0.22" >节段100(d6prawp0utg)</text><rect x="62.30" y="191.00" width="14" height="1.2" fill="#fc8452"/><circle cx="69.30" cy="191.60" r="3.1" fill="#fc8452"/><text x="79.50" y="194.30" font-size="7.6" fill="#555" font-weight="normal" text-anchor="start" textLength="68.80" lengthAdjust="spacingAndGlyphs" stroke="#555" stroke-width="0.22" >节段107(dux4kvy9j2d)</text><rect x="154.90" y="191.00" width="14" height="1.2" fill="#9a60b4"/><circle cx="161.90" cy="191.60" r="3.1" fill="#9a60b4"/><text x="172.10" y="194.30" font-size="7.6" fill="#555" font-weight="normal" text-anchor="start" textLength="69.40" lengthAdjust="spacingAndGlyphs" stroke="#555" stroke-width="0.22" >节段49(dqw0u79fmzz)</text><rect x="248.00" y="191.00" width="14" height="1.2" fill="#ea7ccc"/><circle cx="255.00" cy="191.60" r="3.1" fill="#ea7ccc"/><text x="265.20" y="194.30" font-size="7.6" fill="#555" font-weight="normal" text-anchor="start" textLength="69.80" lengthAdjust="spacingAndGlyphs" stroke="#555" stroke-width="0.22" >节段144(d3cdy8vkbf5)</text><rect x="342.00" y="191.00" width="14" height="1.2" fill="#5470c6"/><circle cx="349.00" cy="191.60" r="3.1" fill="#5470c6"/><text x="359.20" y="194.30" font-size="7.6" fill="#555" font-weight="normal" text-anchor="start" textLength="67.90" lengthAdjust="spacingAndGlyphs" stroke="#555" stroke-width="0.22" >节段146(d2727wlcvkl)</text></svg><svg style="position:absolute;left:0;top:0" width="831" height="489" viewBox="0 0 831 489"><text x="594.00" y="430.00" font-size="7.4" fill="#666" font-weight="normal" text-anchor="start" textLength="75.50" lengthAdjust="spacingAndGlyphs" >2026-01-09 08:38:26</text><text x="594.00" y="441.80" font-size="7.4" fill="#666" font-weight="normal" text-anchor="start" textLength="106.00" lengthAdjust="spacingAndGlyphs" >节段58(dpxijybdvq2)：-1.910</text><text x="594.00" y="453.70" font-size="7.4" fill="#666" font-weight="normal" text-anchor="start" textLength="106.00" lengthAdjust="spacingAndGlyphs" >节段59(di688b6n1q9)：1.070</text></svg><div style="position:absolute;left:847.8px;top:178.1px;width:185.5px;height:83.8px;background:#fff;border:1px solid #ececec;border-radius:2px;box-shadow:0 0 1.5px rgba(0,0,0,0.07)"></div><div style="position:absolute;left:1044.1px;top:178.1px;width:185.5px;height:83.8px;background:#fff;border:1px solid #ececec;border-radius:2px;box-shadow:0 0 1.5px rgba(0,0,0,0.07)"></div><div style="position:absolute;left:1240.1px;top:178.1px;width:185.5px;height:83.8px;background:#fff;border:1px solid #ececec;border-radius:2px;box-shadow:0 0 1.5px rgba(0,0,0,0.07)"></div><div style="position:absolute;left:1436.2px;top:178.1px;width:185.5px;height:83.8px;background:#fff;border:1px solid #ececec;border-radius:2px;box-shadow:0 0 1.5px rgba(0,0,0,0.07)"></div><div style="position:absolute;left:847.8px;top:273.4px;width:185.5px;height:83.8px;background:#fff;border:1px solid #ececec;border-radius:2px;box-shadow:0 0 1.5px rgba(0,0,0,0.07)"></div><div style="position:absolute;left:1044.1px;top:273.4px;width:185.5px;height:83.8px;background:#fff;border:1px solid #ececec;border-radius:2px;box-shadow:0 0 1.5px rgba(0,0,0,0.07)"></div><div style="position:absolute;left:1240.1px;top:273.4px;width:185.5px;height:83.8px;background:#fff;border:1px solid #ececec;border-radius:2px;box-shadow:0 0 1.5px rgba(0,0,0,0.07)"></div><div style="position:absolute;left:1436.2px;top:273.4px;width:185.5px;height:83.8px;background:#fff;border:1px solid #ececec;border-radius:2px;box-shadow:0 0 1.5px rgba(0,0,0,0.07)"></div><div style="position:absolute;left:847.8px;top:368.3px;width:185.5px;height:83.8px;background:#fff;border:1px solid #ececec;border-radius:2px;box-shadow:0 0 1.5px rgba(0,0,0,0.07)"></div><div style="position:absolute;left:1044.1px;top:368.3px;width:185.5px;height:83.8px;background:#fff;border:1px solid #ececec;border-radius:2px;box-shadow:0 0 1.5px rgba(0,0,0,0.07)"></div><div style="position:absolute;left:1240.1px;top:368.3px;width:185.5px;height:83.8px;background:#fff;border:1px solid #ececec;border-radius:2px;box-shadow:0 0 1.5px rgba(0,0,0,0.07)"></div><div style="position:absolute;left:1436.2px;top:368.3px;width:185.5px;height:83.8px;background:#fff;border:1px solid #ececec;border-radius:2px;box-shadow:0 0 1.5px rgba(0,0,0,0.07)"></div><div style="position:absolute;left:847.8px;top:463.3px;width:185.5px;height:4px;background:#fff;border:1px solid #ececec;border-radius:2px;box-shadow:0 0 1.5px rgba(0,0,0,0.07)"></div><div style="position:absolute;left:1044.1px;top:463.3px;width:185.5px;height:4px;background:#fff;border:1px solid #ececec;border-radius:2px;box-shadow:0 0 1.5px rgba(0,0,0,0.07)"></div><div style="position:absolute;left:1240.1px;top:463.3px;width:185.5px;height:4px;background:#fff;border:1px solid #ececec;border-radius:2px;box-shadow:0 0 1.5px rgba(0,0,0,0.07)"></div><div style="position:absolute;left:1436.2px;top:463.3px;width:185.5px;height:4px;background:#fff;border:1px solid #ececec;border-radius:2px;box-shadow:0 0 1.5px rgba(0,0,0,0.07)"></div><svg style="position:absolute;left:0;top:0" width="1662" height="489" viewBox="0 0 1662 489"><text x="1050.30" y="195.20" font-size="8.6" fill="#666" font-weight="normal" text-anchor="start" textLength="53.00" lengthAdjust="spacingAndGlyphs" stroke="#666" stroke-width="0.22" >仰俯轴加速度</text><text x="1050.30" y="211.60" font-size="15.6" fill="#3b4453" font-weight="normal" text-anchor="start" textLength="73.50" lengthAdjust="spacingAndGlyphs" stroke="#3b4453" stroke-width="0.22" >-5.3602mg</text><rect x="1200.50" y="185.90" width="7.2" height="1.0" fill="#5a6270"/><rect x="1200.50" y="188.05" width="7.2" height="1.0" fill="#5a6270"/><rect x="1200.50" y="190.20" width="7.2" height="1.0" fill="#5a6270"/><path d="M1216.17 186.27 A3.3 3.3 0 0 1 1221.77 188.14" fill="none" stroke="#5a6270" stroke-width="1.2"/><path d="M1220.83 190.93 A3.3 3.3 0 0 1 1215.23 189.06" fill="none" stroke="#5a6270" stroke-width="1.2"/><path d="M1220.10 188.00 L1223.30 188.00 L1221.80 189.90 Z" fill="#5a6270"/><path d="M1213.70 189.20 L1216.90 189.20 L1215.20 187.30 Z" fill="#5a6270"/><rect x="1050.10" y="221.00" width="173.00" height="31.00" fill="#968ddb"/><rect x="1050.10" y="251.40" width="173.00" height="1.2" fill="#7466cf"/><circle cx="1062.46" cy="252.00" r="1.4" fill="#b4acea" stroke="#7466cf" stroke-width="0.75"/><circle cx="1074.81" cy="252.00" r="1.4" fill="#b4acea" stroke="#7466cf" stroke-width="0.75"/><circle cx="1087.17" cy="252.00" r="1.4" fill="#b4acea" stroke="#7466cf" stroke-width="0.75"/><circle cx="1099.53" cy="252.00" r="1.4" fill="#b4acea" stroke="#7466cf" stroke-width="0.75"/><circle cx="1111.89" cy="252.00" r="1.4" fill="#b4acea" stroke="#7466cf" stroke-width="0.75"/><circle cx="1124.24" cy="252.00" r="1.4" fill="#b4acea" stroke="#7466cf" stroke-width="0.75"/><circle cx="1136.60" cy="252.00" r="1.4" fill="#b4acea" stroke="#7466cf" stroke-width="0.75"/><circle cx="1148.96" cy="252.00" r="1.4" fill="#b4acea" stroke="#7466cf" stroke-width="0.75"/><circle cx="1161.31" cy="252.00" r="1.4" fill="#b4acea" stroke="#7466cf" stroke-width="0.75"/><circle cx="1173.67" cy="252.00" r="1.4" fill="#b4acea" stroke="#7466cf" stroke-width="0.75"/><circle cx="1186.03" cy="252.00" r="1.4" fill="#b4acea" stroke="#7466cf" stroke-width="0.75"/><circle cx="1198.39" cy="252.00" r="1.4" fill="#b4acea" stroke="#7466cf" stroke-width="0.75"/><circle cx="1210.74" cy="252.00" r="1.4" fill="#b4acea" stroke="#7466cf" stroke-width="0.75"/><text x="1246.30" y="195.20" font-size="8.6" fill="#666" font-weight="normal" text-anchor="start" textLength="53.00" lengthAdjust="spacingAndGlyphs" stroke="#666" stroke-width="0.22" >滚转轴加速度</text><text x="1246.30" y="211.60" font-size="15.6" fill="#3b4453" font-weight="normal" text-anchor="start" textLength="100.00" lengthAdjust="spacingAndGlyphs" stroke="#3b4453" stroke-width="0.22" >-1002.4671mg</text><rect x="1396.50" y="185.90" width="7.2" height="1.0" fill="#5a6270"/><rect x="1396.50" y="188.05" width="7.2" height="1.0" fill="#5a6270"/><rect x="1396.50" y="190.20" width="7.2" height="1.0" fill="#5a6270"/><path d="M1412.17 186.27 A3.3 3.3 0 0 1 1417.77 188.14" fill="none" stroke="#5a6270" stroke-width="1.2"/><path d="M1416.83 190.93 A3.3 3.3 0 0 1 1411.23 189.06" fill="none" stroke="#5a6270" stroke-width="1.2"/><path d="M1416.10 188.00 L1419.30 188.00 L1417.80 189.90 Z" fill="#5a6270"/><path d="M1409.70 189.20 L1412.90 189.20 L1411.20 187.30 Z" fill="#5a6270"/><rect x="1246.10" y="221.00" width="173.00" height="30.50" fill="#968ddb"/><rect x="1246.10" y="250.90" width="173.00" height="1.2" fill="#7466cf"/><circle cx="1258.46" cy="251.50" r="1.4" fill="#b4acea" stroke="#7466cf" stroke-width="0.75"/><circle cx="1270.81" cy="251.50" r="1.4" fill="#b4acea" stroke="#7466cf" stroke-width="0.75"/><circle cx="1283.17" cy="251.50" r="1.4" fill="#b4acea" stroke="#7466cf" stroke-width="0.75"/><circle cx="1295.53" cy="251.50" r="1.4" fill="#b4acea" stroke="#7466cf" stroke-width="0.75"/><circle cx="1307.89" cy="251.50" r="1.4" fill="#b4acea" stroke="#7466cf" stroke-width="0.75"/><circle cx="1320.24" cy="251.50" r="1.4" fill="#b4acea" stroke="#7466cf" stroke-width="0.75"/><circle cx="1332.60" cy="251.50" r="1.4" fill="#b4acea" stroke="#7466cf" stroke-width="0.75"/><circle cx="1344.96" cy="251.50" r="1.4" fill="#b4acea" stroke="#7466cf" stroke-width="0.75"/><circle cx="1357.31" cy="251.50" r="1.4" fill="#b4acea" stroke="#7466cf" stroke-width="0.75"/><circle cx="1369.67" cy="251.50" r="1.4" fill="#b4acea" stroke="#7466cf" stroke-width="0.75"/><circle cx="1382.03" cy="251.50" r="1.4" fill="#b4acea" stroke="#7466cf" stroke-width="0.75"/><circle cx="1394.39" cy="251.50" r="1.4" fill="#b4acea" stroke="#7466cf" stroke-width="0.75"/><circle cx="1406.74" cy="251.50" r="1.4" fill="#b4acea" stroke="#7466cf" stroke-width="0.75"/><text x="1442.40" y="195.20" font-size="8.6" fill="#666" font-weight="normal" text-anchor="start" textLength="53.00" lengthAdjust="spacingAndGlyphs" stroke="#666" stroke-width="0.22" >铅锤轴加速度</text><text x="1442.40" y="211.60" font-size="15.6" fill="#3b4453" font-weight="normal" text-anchor="start" textLength="83.00" lengthAdjust="spacingAndGlyphs" stroke="#3b4453" stroke-width="0.22" >-18.7139mg</text><rect x="1592.60" y="185.90" width="7.2" height="1.0" fill="#5a6270"/><rect x="1592.60" y="188.05" width="7.2" height="1.0" fill="#5a6270"/><rect x="1592.60" y="190.20" width="7.2" height="1.0" fill="#5a6270"/><path d="M1608.27 186.27 A3.3 3.3 0 0 1 1613.87 188.14" fill="none" stroke="#5a6270" stroke-width="1.2"/><path d="M1612.93 190.93 A3.3 3.3 0 0 1 1607.33 189.06" fill="none" stroke="#5a6270" stroke-width="1.2"/><path d="M1612.20 188.00 L1615.40 188.00 L1613.90 189.90 Z" fill="#5a6270"/><path d="M1605.80 189.20 L1609.00 189.20 L1607.30 187.30 Z" fill="#5a6270"/><rect x="1442.20" y="221.00" width="173.00" height="31.00" fill="#968ddb"/><rect x="1442.20" y="251.40" width="173.00" height="1.2" fill="#7466cf"/><circle cx="1454.56" cy="252.00" r="1.4" fill="#b4acea" stroke="#7466cf" stroke-width="0.75"/><circle cx="1466.91" cy="252.00" r="1.4" fill="#b4acea" stroke="#7466cf" stroke-width="0.75"/><circle cx="1479.27" cy="252.00" r="1.4" fill="#b4acea" stroke="#7466cf" stroke-width="0.75"/><circle cx="1491.63" cy="252.00" r="1.4" fill="#b4acea" stroke="#7466cf" stroke-width="0.75"/><circle cx="1503.99" cy="252.00" r="1.4" fill="#b4acea" stroke="#7466cf" stroke-width="0.75"/><circle cx="1516.34" cy="252.00" r="1.4" fill="#b4acea" stroke="#7466cf" stroke-width="0.75"/><circle cx="1528.70" cy="252.00" r="1.4" fill="#b4acea" stroke="#7466cf" stroke-width="0.75"/><circle cx="1541.06" cy="252.00" r="1.4" fill="#b4acea" stroke="#7466cf" stroke-width="0.75"/><circle cx="1553.41" cy="252.00" r="1.4" fill="#b4acea" stroke="#7466cf" stroke-width="0.75"/><circle cx="1565.77" cy="252.00" r="1.4" fill="#b4acea" stroke="#7466cf" stroke-width="0.75"/><circle cx="1578.13" cy="252.00" r="1.4" fill="#b4acea" stroke="#7466cf" stroke-width="0.75"/><circle cx="1590.49" cy="252.00" r="1.4" fill="#b4acea" stroke="#7466cf" stroke-width="0.75"/><circle cx="1602.84" cy="252.00" r="1.4" fill="#b4acea" stroke="#7466cf" stroke-width="0.75"/><text x="854.00" y="290.50" font-size="8.6" fill="#666" font-weight="normal" text-anchor="start" textLength="62.00" lengthAdjust="spacingAndGlyphs" stroke="#666" stroke-width="0.22" >倾角传感器温度</text><text x="854.00" y="310.30" font-size="15.6" fill="#3b4453" font-weight="normal" text-anchor="start" textLength="71.50" lengthAdjust="spacingAndGlyphs" stroke="#3b4453" stroke-width="0.22" >22.7248°C</text><rect x="1004.20" y="281.20" width="7.2" height="1.0" fill="#5a6270"/><rect x="1004.20" y="283.35" width="7.2" height="1.0" fill="#5a6270"/><rect x="1004.20" y="285.50" width="7.2" height="1.0" fill="#5a6270"/><path d="M1019.87 281.57 A3.3 3.3 0 0 1 1025.47 283.44" fill="none" stroke="#5a6270" stroke-width="1.2"/><path d="M1024.53 286.23 A3.3 3.3 0 0 1 1018.93 284.36" fill="none" stroke="#5a6270" stroke-width="1.2"/><path d="M1023.80 283.30 L1027.00 283.30 L1025.50 285.20 Z" fill="#5a6270"/><path d="M1017.40 284.50 L1020.60 284.50 L1018.90 282.60 Z" fill="#5a6270"/><rect x="853.80" y="323.80" width="173.00" height="29.50" fill="#968ddb"/><rect x="853.80" y="323.20" width="173.00" height="1.2" fill="#7466cf"/><circle cx="866.16" cy="323.80" r="1.4" fill="#b4acea" stroke="#7466cf" stroke-width="0.75"/><circle cx="878.51" cy="323.80" r="1.4" fill="#b4acea" stroke="#7466cf" stroke-width="0.75"/><circle cx="890.87" cy="323.80" r="1.4" fill="#b4acea" stroke="#7466cf" stroke-width="0.75"/><circle cx="903.23" cy="323.80" r="1.4" fill="#b4acea" stroke="#7466cf" stroke-width="0.75"/><circle cx="915.59" cy="323.80" r="1.4" fill="#b4acea" stroke="#7466cf" stroke-width="0.75"/><circle cx="927.94" cy="323.80" r="1.4" fill="#b4acea" stroke="#7466cf" stroke-width="0.75"/><circle cx="940.30" cy="323.80" r="1.4" fill="#b4acea" stroke="#7466cf" stroke-width="0.75"/><circle cx="952.66" cy="323.80" r="1.4" fill="#b4acea" stroke="#7466cf" stroke-width="0.75"/><circle cx="965.01" cy="323.80" r="1.4" fill="#b4acea" stroke="#7466cf" stroke-width="0.75"/><circle cx="977.37" cy="323.80" r="1.4" fill="#b4acea" stroke="#7466cf" stroke-width="0.75"/><circle cx="989.73" cy="323.80" r="1.4" fill="#b4acea" stroke="#7466cf" stroke-width="0.75"/><circle cx="1002.09" cy="323.80" r="1.4" fill="#b4acea" stroke="#7466cf" stroke-width="0.75"/><circle cx="1014.44" cy="323.80" r="1.4" fill="#b4acea" stroke="#7466cf" stroke-width="0.75"/><text x="1050.30" y="290.50" font-size="8.6" fill="#666" font-weight="normal" text-anchor="start" textLength="44.00" lengthAdjust="spacingAndGlyphs" stroke="#666" stroke-width="0.22" >仰俯轴角度</text><text x="1050.30" y="306.30" font-size="15.6" fill="#3b4453" font-weight="normal" text-anchor="start" textLength="58.70" lengthAdjust="spacingAndGlyphs" stroke="#3b4453" stroke-width="0.22" >-0.3063°</text><rect x="1200.50" y="281.20" width="7.2" height="1.0" fill="#5a6270"/><rect x="1200.50" y="283.35" width="7.2" height="1.0" fill="#5a6270"/><rect x="1200.50" y="285.50" width="7.2" height="1.0" fill="#5a6270"/><path d="M1216.17 281.57 A3.3 3.3 0 0 1 1221.77 283.44" fill="none" stroke="#5a6270" stroke-width="1.2"/><path d="M1220.83 286.23 A3.3 3.3 0 0 1 1215.23 284.36" fill="none" stroke="#5a6270" stroke-width="1.2"/><path d="M1220.10 283.30 L1223.30 283.30 L1221.80 285.20 Z" fill="#5a6270"/><path d="M1213.70 284.50 L1216.90 284.50 L1215.20 282.60 Z" fill="#5a6270"/><rect x="1050.10" y="316.20" width="173.00" height="29.60" fill="#968ddb"/><rect x="1050.10" y="345.20" width="173.00" height="1.2" fill="#7466cf"/><circle cx="1062.46" cy="345.80" r="1.4" fill="#b4acea" stroke="#7466cf" stroke-width="0.75"/><circle cx="1074.81" cy="345.80" r="1.4" fill="#b4acea" stroke="#7466cf" stroke-width="0.75"/><circle cx="1087.17" cy="345.80" r="1.4" fill="#b4acea" stroke="#7466cf" stroke-width="0.75"/><circle cx="1099.53" cy="345.80" r="1.4" fill="#b4acea" stroke="#7466cf" stroke-width="0.75"/><circle cx="1111.89" cy="345.80" r="1.4" fill="#b4acea" stroke="#7466cf" stroke-width="0.75"/><circle cx="1124.24" cy="345.80" r="1.4" fill="#b4acea" stroke="#7466cf" stroke-width="0.75"/><circle cx="1136.60" cy="345.80" r="1.4" fill="#b4acea" stroke="#7466cf" stroke-width="0.75"/><circle cx="1148.96" cy="345.80" r="1.4" fill="#b4acea" stroke="#7466cf" stroke-width="0.75"/><circle cx="1161.31" cy="345.80" r="1.4" fill="#b4acea" stroke="#7466cf" stroke-width="0.75"/><circle cx="1173.67" cy="345.80" r="1.4" fill="#b4acea" stroke="#7466cf" stroke-width="0.75"/><circle cx="1186.03" cy="345.80" r="1.4" fill="#b4acea" stroke="#7466cf" stroke-width="0.75"/><circle cx="1198.39" cy="345.80" r="1.4" fill="#b4acea" stroke="#7466cf" stroke-width="0.75"/><circle cx="1210.74" cy="345.80" r="1.4" fill="#b4acea" stroke="#7466cf" stroke-width="0.75"/><text x="1246.30" y="290.50" font-size="8.6" fill="#666" font-weight="normal" text-anchor="start" textLength="44.00" lengthAdjust="spacingAndGlyphs" stroke="#666" stroke-width="0.22" >滚转轴角度</text><text x="1246.30" y="306.30" font-size="15.6" fill="#3b4453" font-weight="normal" text-anchor="start" textLength="67.20" lengthAdjust="spacingAndGlyphs" stroke="#3b4453" stroke-width="0.22" >-88.8875°</text><rect x="1396.50" y="281.20" width="7.2" height="1.0" fill="#5a6270"/><rect x="1396.50" y="283.35" width="7.2" height="1.0" fill="#5a6270"/><rect x="1396.50" y="285.50" width="7.2" height="1.0" fill="#5a6270"/><path d="M1412.17 281.57 A3.3 3.3 0 0 1 1417.77 283.44" fill="none" stroke="#5a6270" stroke-width="1.2"/><path d="M1416.83 286.23 A3.3 3.3 0 0 1 1411.23 284.36" fill="none" stroke="#5a6270" stroke-width="1.2"/><path d="M1416.10 283.30 L1419.30 283.30 L1417.80 285.20 Z" fill="#5a6270"/><path d="M1409.70 284.50 L1412.90 284.50 L1411.20 282.60 Z" fill="#5a6270"/><rect x="1246.10" y="316.20" width="173.00" height="29.60" fill="#968ddb"/><rect x="1246.10" y="345.20" width="173.00" height="1.2" fill="#7466cf"/><circle cx="1258.46" cy="345.80" r="1.4" fill="#b4acea" stroke="#7466cf" stroke-width="0.75"/><circle cx="1270.81" cy="345.80" r="1.4" fill="#b4acea" stroke="#7466cf" stroke-width="0.75"/><circle cx="1283.17" cy="345.80" r="1.4" fill="#b4acea" stroke="#7466cf" stroke-width="0.75"/><circle cx="1295.53" cy="345.80" r="1.4" fill="#b4acea" stroke="#7466cf" stroke-width="0.75"/><circle cx="1307.89" cy="345.80" r="1.4" fill="#b4acea" stroke="#7466cf" stroke-width="0.75"/><circle cx="1320.24" cy="345.80" r="1.4" fill="#b4acea" stroke="#7466cf" stroke-width="0.75"/><circle cx="1332.60" cy="345.80" r="1.4" fill="#b4acea" stroke="#7466cf" stroke-width="0.75"/><circle cx="1344.96" cy="345.80" r="1.4" fill="#b4acea" stroke="#7466cf" stroke-width="0.75"/><circle cx="1357.31" cy="345.80" r="1.4" fill="#b4acea" stroke="#7466cf" stroke-width="0.75"/><circle cx="1369.67" cy="345.80" r="1.4" fill="#b4acea" stroke="#7466cf" stroke-width="0.75"/><circle cx="1382.03" cy="345.80" r="1.4" fill="#b4acea" stroke="#7466cf" stroke-width="0.75"/><circle cx="1394.39" cy="345.80" r="1.4" fill="#b4acea" stroke="#7466cf" stroke-width="0.75"/><circle cx="1406.74" cy="345.80" r="1.4" fill="#b4acea" stroke="#7466cf" stroke-width="0.75"/><text x="1442.40" y="290.50" font-size="8.6" fill="#666" font-weight="normal" text-anchor="start" textLength="44.00" lengthAdjust="spacingAndGlyphs" stroke="#666" stroke-width="0.22" >铅锤轴角度</text><text x="1442.40" y="306.30" font-size="15.6" fill="#3b4453" font-weight="normal" text-anchor="start" textLength="58.60" lengthAdjust="spacingAndGlyphs" stroke="#3b4453" stroke-width="0.22" >-1.0695°</text><rect x="1592.60" y="281.20" width="7.2" height="1.0" fill="#5a6270"/><rect x="1592.60" y="283.35" width="7.2" height="1.0" fill="#5a6270"/><rect x="1592.60" y="285.50" width="7.2" height="1.0" fill="#5a6270"/><path d="M1608.27 281.57 A3.3 3.3 0 0 1 1613.87 283.44" fill="none" stroke="#5a6270" stroke-width="1.2"/><path d="M1612.93 286.23 A3.3 3.3 0 0 1 1607.33 284.36" fill="none" stroke="#5a6270" stroke-width="1.2"/><path d="M1612.20 283.30 L1615.40 283.30 L1613.90 285.20 Z" fill="#5a6270"/><path d="M1605.80 284.50 L1609.00 284.50 L1607.30 282.60 Z" fill="#5a6270"/><rect x="1442.20" y="316.20" width="173.00" height="29.60" fill="#968ddb"/><rect x="1442.20" y="345.20" width="173.00" height="1.2" fill="#7466cf"/><circle cx="1454.56" cy="345.80" r="1.4" fill="#b4acea" stroke="#7466cf" stroke-width="0.75"/><circle cx="1466.91" cy="345.80" r="1.4" fill="#b4acea" stroke="#7466cf" stroke-width="0.75"/><circle cx="1479.27" cy="345.80" r="1.4" fill="#b4acea" stroke="#7466cf" stroke-width="0.75"/><circle cx="1491.63" cy="345.80" r="1.4" fill="#b4acea" stroke="#7466cf" stroke-width="0.75"/><circle cx="1503.99" cy="345.80" r="1.4" fill="#b4acea" stroke="#7466cf" stroke-width="0.75"/><circle cx="1516.34" cy="345.80" r="1.4" fill="#b4acea" stroke="#7466cf" stroke-width="0.75"/><circle cx="1528.70" cy="345.80" r="1.4" fill="#b4acea" stroke="#7466cf" stroke-width="0.75"/><circle cx="1541.06" cy="345.80" r="1.4" fill="#b4acea" stroke="#7466cf" stroke-width="0.75"/><circle cx="1553.41" cy="345.80" r="1.4" fill="#b4acea" stroke="#7466cf" stroke-width="0.75"/><circle cx="1565.77" cy="345.80" r="1.4" fill="#b4acea" stroke="#7466cf" stroke-width="0.75"/><circle cx="1578.13" cy="345.80" r="1.4" fill="#b4acea" stroke="#7466cf" stroke-width="0.75"/><circle cx="1590.49" cy="345.80" r="1.4" fill="#b4acea" stroke="#7466cf" stroke-width="0.75"/><circle cx="1602.84" cy="345.80" r="1.4" fill="#b4acea" stroke="#7466cf" stroke-width="0.75"/><text x="854.00" y="385.40" font-size="8.6" fill="#666" font-weight="normal" text-anchor="start" textLength="71.00" lengthAdjust="spacingAndGlyphs" stroke="#666" stroke-width="0.22" >仰俯轴角度变化量</text><text x="854.00" y="401.30" font-size="15.6" fill="#3b4453" font-weight="normal" text-anchor="start" textLength="59.00" lengthAdjust="spacingAndGlyphs" stroke="#3b4453" stroke-width="0.22" >-0.2587°</text><rect x="1004.20" y="376.10" width="7.2" height="1.0" fill="#5a6270"/><rect x="1004.20" y="378.25" width="7.2" height="1.0" fill="#5a6270"/><rect x="1004.20" y="380.40" width="7.2" height="1.0" fill="#5a6270"/><path d="M1019.87 376.47 A3.3 3.3 0 0 1 1025.47 378.34" fill="none" stroke="#5a6270" stroke-width="1.2"/><path d="M1024.53 381.13 A3.3 3.3 0 0 1 1018.93 379.26" fill="none" stroke="#5a6270" stroke-width="1.2"/><path d="M1023.80 378.20 L1027.00 378.20 L1025.50 380.10 Z" fill="#5a6270"/><path d="M1017.40 379.40 L1020.60 379.40 L1018.90 377.50 Z" fill="#5a6270"/><rect x="853.80" y="411.20" width="173.00" height="29.80" fill="#968ddb"/><rect x="853.80" y="440.40" width="173.00" height="1.2" fill="#7466cf"/><circle cx="866.16" cy="441.00" r="1.4" fill="#b4acea" stroke="#7466cf" stroke-width="0.75"/><circle cx="878.51" cy="441.00" r="1.4" fill="#b4acea" stroke="#7466cf" stroke-width="0.75"/><circle cx="890.87" cy="441.00" r="1.4" fill="#b4acea" stroke="#7466cf" stroke-width="0.75"/><circle cx="903.23" cy="441.00" r="1.4" fill="#b4acea" stroke="#7466cf" stroke-width="0.75"/><circle cx="915.59" cy="441.00" r="1.4" fill="#b4acea" stroke="#7466cf" stroke-width="0.75"/><circle cx="927.94" cy="441.00" r="1.4" fill="#b4acea" stroke="#7466cf" stroke-width="0.75"/><circle cx="940.30" cy="441.00" r="1.4" fill="#b4acea" stroke="#7466cf" stroke-width="0.75"/><circle cx="952.66" cy="441.00" r="1.4" fill="#b4acea" stroke="#7466cf" stroke-width="0.75"/><circle cx="965.01" cy="441.00" r="1.4" fill="#b4acea" stroke="#7466cf" stroke-width="0.75"/><circle cx="977.37" cy="441.00" r="1.4" fill="#b4acea" stroke="#7466cf" stroke-width="0.75"/><circle cx="989.73" cy="441.00" r="1.4" fill="#b4acea" stroke="#7466cf" stroke-width="0.75"/><circle cx="1002.09" cy="441.00" r="1.4" fill="#b4acea" stroke="#7466cf" stroke-width="0.75"/><circle cx="1014.44" cy="441.00" r="1.4" fill="#b4acea" stroke="#7466cf" stroke-width="0.75"/><text x="1050.30" y="385.40" font-size="8.6" fill="#666" font-weight="normal" text-anchor="start" textLength="71.00" lengthAdjust="spacingAndGlyphs" stroke="#666" stroke-width="0.22" >滚转轴角度变化量</text><text x="1050.30" y="401.30" font-size="15.6" fill="#3b4453" font-weight="normal" text-anchor="start" textLength="53.20" lengthAdjust="spacingAndGlyphs" stroke="#3b4453" stroke-width="0.22" >0.3828°</text><rect x="1200.50" y="376.10" width="7.2" height="1.0" fill="#5a6270"/><rect x="1200.50" y="378.25" width="7.2" height="1.0" fill="#5a6270"/><rect x="1200.50" y="380.40" width="7.2" height="1.0" fill="#5a6270"/><path d="M1216.17 376.47 A3.3 3.3 0 0 1 1221.77 378.34" fill="none" stroke="#5a6270" stroke-width="1.2"/><path d="M1220.83 381.13 A3.3 3.3 0 0 1 1215.23 379.26" fill="none" stroke="#5a6270" stroke-width="1.2"/><path d="M1220.10 378.20 L1223.30 378.20 L1221.80 380.10 Z" fill="#5a6270"/><path d="M1213.70 379.40 L1216.90 379.40 L1215.20 377.50 Z" fill="#5a6270"/><rect x="1050.10" y="412.40" width="173.00" height="32.10" fill="#968ddb"/><rect x="1050.10" y="411.80" width="173.00" height="1.2" fill="#7466cf"/><circle cx="1062.46" cy="412.40" r="1.4" fill="#b4acea" stroke="#7466cf" stroke-width="0.75"/><circle cx="1074.81" cy="412.40" r="1.4" fill="#b4acea" stroke="#7466cf" stroke-width="0.75"/><circle cx="1087.17" cy="412.40" r="1.4" fill="#b4acea" stroke="#7466cf" stroke-width="0.75"/><circle cx="1099.53" cy="412.40" r="1.4" fill="#b4acea" stroke="#7466cf" stroke-width="0.75"/><circle cx="1111.89" cy="412.40" r="1.4" fill="#b4acea" stroke="#7466cf" stroke-width="0.75"/><circle cx="1124.24" cy="412.40" r="1.4" fill="#b4acea" stroke="#7466cf" stroke-width="0.75"/><circle cx="1136.60" cy="412.40" r="1.4" fill="#b4acea" stroke="#7466cf" stroke-width="0.75"/><circle cx="1148.96" cy="412.40" r="1.4" fill="#b4acea" stroke="#7466cf" stroke-width="0.75"/><circle cx="1161.31" cy="412.40" r="1.4" fill="#b4acea" stroke="#7466cf" stroke-width="0.75"/><circle cx="1173.67" cy="412.40" r="1.4" fill="#b4acea" stroke="#7466cf" stroke-width="0.75"/><circle cx="1186.03" cy="412.40" r="1.4" fill="#b4acea" stroke="#7466cf" stroke-width="0.75"/><circle cx="1198.39" cy="412.40" r="1.4" fill="#b4acea" stroke="#7466cf" stroke-width="0.75"/><circle cx="1210.74" cy="412.40" r="1.4" fill="#b4acea" stroke="#7466cf" stroke-width="0.75"/><text x="1246.30" y="385.40" font-size="8.6" fill="#666" font-weight="normal" text-anchor="start" textLength="71.00" lengthAdjust="spacingAndGlyphs" stroke="#666" stroke-width="0.22" >铅锤轴角度变化量</text><text x="1246.30" y="401.30" font-size="15.6" fill="#3b4453" font-weight="normal" text-anchor="start" textLength="59.00" lengthAdjust="spacingAndGlyphs" stroke="#3b4453" stroke-width="0.22" >-1.7976°</text><rect x="1396.50" y="376.10" width="7.2" height="1.0" fill="#5a6270"/><rect x="1396.50" y="378.25" width="7.2" height="1.0" fill="#5a6270"/><rect x="1396.50" y="380.40" width="7.2" height="1.0" fill="#5a6270"/><path d="M1412.17 376.47 A3.3 3.3 0 0 1 1417.77 378.34" fill="none" stroke="#5a6270" stroke-width="1.2"/><path d="M1416.83 381.13 A3.3 3.3 0 0 1 1411.23 379.26" fill="none" stroke="#5a6270" stroke-width="1.2"/><path d="M1416.10 378.20 L1419.30 378.20 L1417.80 380.10 Z" fill="#5a6270"/><path d="M1409.70 379.40 L1412.90 379.40 L1411.20 377.50 Z" fill="#5a6270"/><rect x="1246.10" y="411.20" width="173.00" height="33.40" fill="#968ddb"/><ellipse cx="1246.10" cy="443.40" rx="1.6" ry="0.7" fill="#7f72d3"/><ellipse cx="1258.46" cy="443.40" rx="1.6" ry="0.7" fill="#7f72d3"/><ellipse cx="1270.81" cy="443.40" rx="1.6" ry="0.7" fill="#7f72d3"/><ellipse cx="1283.17" cy="443.40" rx="1.6" ry="0.7" fill="#7f72d3"/><ellipse cx="1295.53" cy="443.40" rx="1.6" ry="0.7" fill="#7f72d3"/><ellipse cx="1307.89" cy="443.40" rx="1.6" ry="0.7" fill="#7f72d3"/><ellipse cx="1320.24" cy="443.40" rx="1.6" ry="0.7" fill="#7f72d3"/><ellipse cx="1332.60" cy="443.40" rx="1.6" ry="0.7" fill="#7f72d3"/><ellipse cx="1344.96" cy="443.40" rx="1.6" ry="0.7" fill="#7f72d3"/><ellipse cx="1357.31" cy="443.40" rx="1.6" ry="0.7" fill="#7f72d3"/><ellipse cx="1369.67" cy="443.40" rx="1.6" ry="0.7" fill="#7f72d3"/><ellipse cx="1382.03" cy="443.40" rx="1.6" ry="0.7" fill="#7f72d3"/><ellipse cx="1394.39" cy="443.40" rx="1.6" ry="0.7" fill="#7f72d3"/><ellipse cx="1406.74" cy="443.40" rx="1.6" ry="0.7" fill="#7f72d3"/><ellipse cx="1419.10" cy="443.40" rx="1.6" ry="0.7" fill="#7f72d3"/><text x="1442.40" y="385.40" font-size="8.6" fill="#666" font-weight="normal" text-anchor="start" textLength="40.00" lengthAdjust="spacingAndGlyphs" stroke="#666" stroke-width="0.22" >CD1x坐标</text><text x="1442.40" y="401.30" font-size="15.6" fill="#3b4453" font-weight="normal" text-anchor="start" textLength="99.40" lengthAdjust="spacingAndGlyphs" stroke="#3b4453" stroke-width="0.22" >3136.2461mm</text><rect x="1592.60" y="376.10" width="7.2" height="1.0" fill="#5a6270"/><rect x="1592.60" y="378.25" width="7.2" height="1.0" fill="#5a6270"/><rect x="1592.60" y="380.40" width="7.2" height="1.0" fill="#5a6270"/><path d="M1608.27 376.47 A3.3 3.3 0 0 1 1613.87 378.34" fill="none" stroke="#5a6270" stroke-width="1.2"/><path d="M1612.93 381.13 A3.3 3.3 0 0 1 1607.33 379.26" fill="none" stroke="#5a6270" stroke-width="1.2"/><path d="M1612.20 378.20 L1615.40 378.20 L1613.90 380.10 Z" fill="#5a6270"/><path d="M1605.80 379.40 L1609.00 379.40 L1607.30 377.50 Z" fill="#5a6270"/><rect x="1442.20" y="414.20" width="173.00" height="30.50" fill="#968ddb"/><rect x="1442.20" y="413.60" width="173.00" height="1.2" fill="#7466cf"/><circle cx="1454.56" cy="414.20" r="1.4" fill="#b4acea" stroke="#7466cf" stroke-width="0.75"/><circle cx="1466.91" cy="414.20" r="1.4" fill="#b4acea" stroke="#7466cf" stroke-width="0.75"/><circle cx="1479.27" cy="414.20" r="1.4" fill="#b4acea" stroke="#7466cf" stroke-width="0.75"/><circle cx="1491.63" cy="414.20" r="1.4" fill="#b4acea" stroke="#7466cf" stroke-width="0.75"/><circle cx="1503.99" cy="414.20" r="1.4" fill="#b4acea" stroke="#7466cf" stroke-width="0.75"/><circle cx="1516.34" cy="414.20" r="1.4" fill="#b4acea" stroke="#7466cf" stroke-width="0.75"/><circle cx="1528.70" cy="414.20" r="1.4" fill="#b4acea" stroke="#7466cf" stroke-width="0.75"/><circle cx="1541.06" cy="414.20" r="1.4" fill="#b4acea" stroke="#7466cf" stroke-width="0.75"/><circle cx="1553.41" cy="414.20" r="1.4" fill="#b4acea" stroke="#7466cf" stroke-width="0.75"/><circle cx="1565.77" cy="414.20" r="1.4" fill="#b4acea" stroke="#7466cf" stroke-width="0.75"/><circle cx="1578.13" cy="414.20" r="1.4" fill="#b4acea" stroke="#7466cf" stroke-width="0.75"/><circle cx="1590.49" cy="414.20" r="1.4" fill="#b4acea" stroke="#7466cf" stroke-width="0.75"/><circle cx="1602.84" cy="414.20" r="1.4" fill="#b4acea" stroke="#7466cf" stroke-width="0.75"/><path d="M1609.60 113.00 A2.4 2.4 0 0 1 1613.68 114.37" fill="none" stroke="#8a8f99" stroke-width="0.9"/><path d="M1613.00 116.40 A2.4 2.4 0 0 1 1608.92 115.03" fill="none" stroke="#8a8f99" stroke-width="0.9"/><path d="M1612.46 114.26 L1614.79 114.26 L1613.70 115.65 Z" fill="#8a8f99"/><path d="M1607.81 115.14 L1610.14 115.14 L1608.90 113.75 Z" fill="#8a8f99"/><text x="854.00" y="195.30" font-size="8.8" fill="#666" font-weight="normal" text-anchor="start" textLength="35.00" lengthAdjust="spacingAndGlyphs" stroke="#666" stroke-width="0.22" >设备状态</text><text x="853.80" y="216.10" font-size="16.0" fill="#3b4453" font-weight="normal" text-anchor="start" textLength="31.50" lengthAdjust="spacingAndGlyphs" stroke="#3b4453" stroke-width="0.22" >在线</text><text x="854.00" y="246.70" font-size="6.4" fill="#555" font-weight="normal" text-anchor="start" textLength="105.50" lengthAdjust="spacingAndGlyphs" >在线时间: 2026-01-09 10:17:34.446</text><path d="M1019.87 186.27 A3.3 3.3 0 0 1 1025.47 188.14" fill="none" stroke="#5a6270" stroke-width="1.2"/><path d="M1024.53 190.93 A3.3 3.3 0 0 1 1018.93 189.06" fill="none" stroke="#5a6270" stroke-width="1.2"/><path d="M1023.80 188.00 L1027.00 188.00 L1025.50 189.90 Z" fill="#5a6270"/><path d="M1017.40 189.20 L1020.60 189.20 L1018.90 187.30 Z" fill="#5a6270"/></svg><!--CONTENT--><div style="position:absolute;left:810px;top:81px;width:9px;height:385px;background:#fafafa"></div><div style="position:absolute;left:15px;top:465.3px;width:804px;height:3.5px;background:#eceef2"></div><div style="position:absolute;left:13px;top:14px;width:808px;height:456.5px;border:2px solid #e4e4e4"></div><div style="position:absolute;left:1633px;top:85px;width:13px;height:381px;background:#f9f9f9;border-left:2px solid #eef0f4"></div><div style="position:absolute;left:837px;top:465.5px;width:809px;height:3.5px;background:#eceef2"></div><div style="position:absolute;left:835px;top:14px;width:813px;height:456.5px;border:2px solid #e4e4e4"></div><div style="position:absolute;left:811.3px;top:93.2px;width:5.8px;height:311px;background:#8c8c8c;border-radius:3px"></div><svg style="position:absolute;left:811.5px;top:85px;" width="6" height="4" viewBox="0 0 6 4"><path d="M0.5 3.5 L3 0.5 L5.5 3.5 Z" fill="#999"/></svg><div style="position:absolute;left:1638.6px;top:97px;width:5.8px;height:93px;background:#8c8c8c;border-radius:3px"></div><svg style="position:absolute;left:1638.5px;top:89px;" width="6" height="4" viewBox="0 0 6 4"><path d="M0.5 3.5 L3 0.5 L5.5 3.5 Z" fill="#999"/></svg>
</div>
</body></html>
